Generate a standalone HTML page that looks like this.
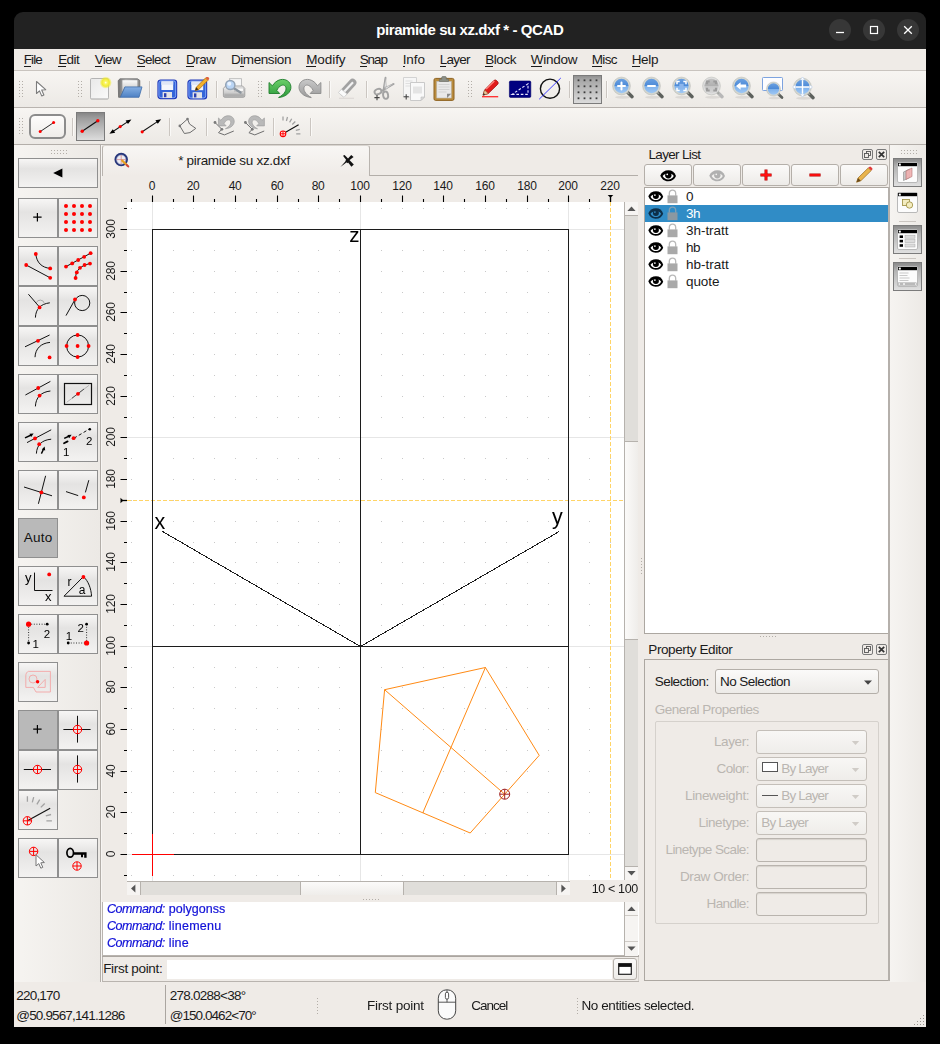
<!DOCTYPE html>
<html><head><meta charset="utf-8"><title>QCAD</title>
<style>
html,body{margin:0;padding:0;background:#000;}
body{width:940px;height:1044px;position:relative;overflow:hidden;font-family:"Liberation Sans",sans-serif;}
.a{position:absolute;display:block;box-sizing:border-box;}
.t{position:absolute;white-space:pre;font-family:"Liberation Sans",sans-serif;}
</style></head>
<body>
<!-- chrome -->
<div class="a" style="left:14px;top:40px;width:912px;height:987px;background:#efebe7;"></div>
<div class="a" style="left:14px;top:12px;width:912px;height:37px;background:#222222;border-radius:9px 9px 0 0;"></div>
<div class="t" style="left:376.25px;top:22.00px;font-size:15px;line-height:15px;color:#ffffff;letter-spacing:-0.418px;font-weight:bold;">piramide su xz.dxf * - QCAD</div>
<div class="a" style="left:829px;top:19px;width:22px;height:22px;background:#373737;border-radius:11px;"></div>
<div class="a" style="left:863px;top:19px;width:22px;height:22px;background:#373737;border-radius:11px;"></div>
<div class="a" style="left:897px;top:19px;width:22px;height:22px;background:#373737;border-radius:11px;"></div>
<svg class="a" style="left:829px;top:19px;" width="22" height="22" viewBox="0 0 22 22"><path d="M7 13.5h8" stroke="#fff" stroke-width="1.3" fill="none"/></svg>
<svg class="a" style="left:863px;top:19px;" width="22" height="22" viewBox="0 0 22 22"><rect x="7.5" y="7.5" width="7" height="7" stroke="#fff" stroke-width="1.2" fill="none"/></svg>
<svg class="a" style="left:897px;top:19px;" width="22" height="22" viewBox="0 0 22 22"><path d="M7.2 7.2l7.6 7.6M14.8 7.2l-7.6 7.6" stroke="#fff" stroke-width="1.3" fill="none"/></svg>
<div class="a" style="left:14px;top:49px;width:912px;height:21px;background:#efebe7;"></div>
<div class="a" style="left:14px;top:70px;width:912px;height:1px;background:#c9c4bf;"></div>
<div class="t" style="left:23.70px;top:53.27px;font-size:13.5px;line-height:13.5px;color:#1a1a1a;letter-spacing:-0.884px;">File</div>
<div class="a" style="left:23.7px;top:66px;width:7.0px;height:1px;background:#1a1a1a;"></div>
<div class="t" style="left:58.20px;top:53.27px;font-size:13.5px;line-height:13.5px;color:#1a1a1a;letter-spacing:-0.588px;">Edit</div>
<div class="a" style="left:58.2px;top:66px;width:7.8px;height:1px;background:#1a1a1a;"></div>
<div class="t" style="left:94.70px;top:53.27px;font-size:13.5px;line-height:13.5px;color:#1a1a1a;letter-spacing:-0.772px;">View</div>
<div class="a" style="left:94.7px;top:66px;width:7.8px;height:1px;background:#1a1a1a;"></div>
<div class="t" style="left:136.80px;top:53.27px;font-size:13.5px;line-height:13.5px;color:#1a1a1a;letter-spacing:-0.744px;">Select</div>
<div class="a" style="left:136.8px;top:66px;width:7.8px;height:1px;background:#1a1a1a;"></div>
<div class="t" style="left:185.90px;top:53.27px;font-size:13.5px;line-height:13.5px;color:#1a1a1a;letter-spacing:-0.467px;">Draw</div>
<div class="a" style="left:185.9px;top:66px;width:8.5px;height:1px;background:#1a1a1a;"></div>
<div class="t" style="left:230.90px;top:53.27px;font-size:13.5px;line-height:13.5px;color:#1a1a1a;letter-spacing:-0.409px;">Dimension</div>
<div class="a" style="left:240.1px;top:66px;width:4.0px;height:1px;background:#1a1a1a;"></div>
<div class="t" style="left:306.20px;top:53.27px;font-size:13.5px;line-height:13.5px;color:#1a1a1a;letter-spacing:-0.072px;">Modify</div>
<div class="a" style="left:306.2px;top:66px;width:10.0px;height:1px;background:#1a1a1a;"></div>
<div class="t" style="left:359.70px;top:53.27px;font-size:13.5px;line-height:13.5px;color:#1a1a1a;letter-spacing:-1.076px;">Snap</div>
<div class="a" style="left:359.7px;top:66px;width:7.8px;height:1px;background:#1a1a1a;"></div>
<div class="t" style="left:402.70px;top:53.27px;font-size:13.5px;line-height:13.5px;color:#1a1a1a;letter-spacing:-0.073px;">Info</div>
<div class="a" style="left:402.7px;top:66px;width:2.6px;height:1px;background:#1a1a1a;"></div>
<div class="t" style="left:439.70px;top:53.27px;font-size:13.5px;line-height:13.5px;color:#1a1a1a;letter-spacing:-0.742px;">Layer</div>
<div class="a" style="left:439.7px;top:66px;width:6.3px;height:1px;background:#1a1a1a;"></div>
<div class="t" style="left:485.20px;top:53.27px;font-size:13.5px;line-height:13.5px;color:#1a1a1a;letter-spacing:-0.428px;">Block</div>
<div class="a" style="left:485.2px;top:66px;width:7.8px;height:1px;background:#1a1a1a;"></div>
<div class="t" style="left:530.70px;top:53.27px;font-size:13.5px;line-height:13.5px;color:#1a1a1a;letter-spacing:-0.243px;">Window</div>
<div class="a" style="left:530.7px;top:66px;width:11.5px;height:1px;background:#1a1a1a;"></div>
<div class="t" style="left:591.70px;top:53.27px;font-size:13.5px;line-height:13.5px;color:#1a1a1a;letter-spacing:-0.648px;">Misc</div>
<div class="a" style="left:591.7px;top:66px;width:10.0px;height:1px;background:#1a1a1a;"></div>
<div class="t" style="left:631.70px;top:53.27px;font-size:13.5px;line-height:13.5px;color:#1a1a1a;letter-spacing:-0.321px;">Help</div>
<div class="a" style="left:631.7px;top:66px;width:8.5px;height:1px;background:#1a1a1a;"></div>
<!-- toolbars -->
<div class="a" style="left:14px;top:71px;width:912px;height:36px;background:linear-gradient(#f7f5f2,#ece9e5);"></div>
<div class="a" style="left:14px;top:107px;width:912px;height:1px;background:#b9b4af;"></div>
<div class="a" style="left:14px;top:108px;width:912px;height:36px;background:linear-gradient(#f7f5f2,#ece9e5);"></div>
<div class="a" style="left:14px;top:144px;width:912px;height:1px;background:#b3aea9;"></div>
<div class="a" style="left:19px;top:81px;width:1px;height:1px;background:#b3aea8;"></div><div class="a" style="left:22px;top:81px;width:1px;height:1px;background:#b3aea8;"></div><div class="a" style="left:19px;top:84px;width:1px;height:1px;background:#b3aea8;"></div><div class="a" style="left:22px;top:84px;width:1px;height:1px;background:#b3aea8;"></div><div class="a" style="left:19px;top:87px;width:1px;height:1px;background:#b3aea8;"></div><div class="a" style="left:22px;top:87px;width:1px;height:1px;background:#b3aea8;"></div><div class="a" style="left:19px;top:90px;width:1px;height:1px;background:#b3aea8;"></div><div class="a" style="left:22px;top:90px;width:1px;height:1px;background:#b3aea8;"></div><div class="a" style="left:19px;top:93px;width:1px;height:1px;background:#b3aea8;"></div><div class="a" style="left:22px;top:93px;width:1px;height:1px;background:#b3aea8;"></div><div class="a" style="left:19px;top:96px;width:1px;height:1px;background:#b3aea8;"></div><div class="a" style="left:22px;top:96px;width:1px;height:1px;background:#b3aea8;"></div>
<svg class="a" style="left:33px;top:79px;" width="16" height="20" viewBox="0 0 16 20"><path d="M3.5 2.5v12l3-2.6 2.2 5 2.2-1-2.2-4.9 4-0.3z" fill="#fff" stroke="#7d7d7d" stroke-width="1.1" stroke-linejoin="round"/></svg>
<div class="a" style="left:78px;top:81px;width:1px;height:1px;background:#b3aea8;"></div><div class="a" style="left:81px;top:81px;width:1px;height:1px;background:#b3aea8;"></div><div class="a" style="left:78px;top:84px;width:1px;height:1px;background:#b3aea8;"></div><div class="a" style="left:81px;top:84px;width:1px;height:1px;background:#b3aea8;"></div><div class="a" style="left:78px;top:87px;width:1px;height:1px;background:#b3aea8;"></div><div class="a" style="left:81px;top:87px;width:1px;height:1px;background:#b3aea8;"></div><div class="a" style="left:78px;top:90px;width:1px;height:1px;background:#b3aea8;"></div><div class="a" style="left:81px;top:90px;width:1px;height:1px;background:#b3aea8;"></div><div class="a" style="left:78px;top:93px;width:1px;height:1px;background:#b3aea8;"></div><div class="a" style="left:81px;top:93px;width:1px;height:1px;background:#b3aea8;"></div><div class="a" style="left:78px;top:96px;width:1px;height:1px;background:#b3aea8;"></div><div class="a" style="left:81px;top:96px;width:1px;height:1px;background:#b3aea8;"></div>
<svg class="a" style="left:88px;top:76px;" width="24" height="26" viewBox="0 0 24 26"><defs><radialGradient id="sun"><stop offset="0" stop-color="#fffff4"/><stop offset="0.22" stop-color="#faf66a"/><stop offset="0.6" stop-color="#f1eb2c" stop-opacity="0.95"/><stop offset="1" stop-color="#f0ea20" stop-opacity="0"/></radialGradient>
<linearGradient id="pg" x1="0" y1="0" x2="1" y2="1"><stop offset="0" stop-color="#e9e9e9"/><stop offset="1" stop-color="#fafafa"/></linearGradient></defs>
<rect x="2.5" y="3.3" width="18" height="20.2" rx="1.2" fill="#9a9a9a" opacity="0.55"/>
<rect x="2.5" y="2.5" width="18" height="20.4" rx="1.2" fill="url(#pg)" stroke="#b4b4b4" stroke-width="1"/>
<circle cx="17.700" cy="6.600" r="6.200" fill="url(#sun)"/></svg>
<svg class="a" style="left:116px;top:76px;" width="28" height="24" viewBox="0 0 28 24"><defs><linearGradient id="fb" x1="0" y1="0" x2="0" y2="1"><stop offset="0" stop-color="#86b0e4"/><stop offset="1" stop-color="#4c80c3"/></linearGradient>
<linearGradient id="fg" x1="0" y1="0" x2="1" y2="0"><stop offset="0" stop-color="#6f6f6f"/><stop offset="0.35" stop-color="#b9b9b9"/><stop offset="1" stop-color="#8c8c8c"/></linearGradient>
<linearGradient id="fp" x1="0" y1="0" x2="0" y2="1"><stop offset="0" stop-color="#fafafa"/><stop offset="1" stop-color="#c4c4c4"/></linearGradient></defs>
<path d="M2.200 4.600L4 2.800H21.500L23.800 4.400V12H9L4.400 21.300H2.600Z" fill="url(#fg)" stroke="#6a6a6a" stroke-width="0.800" stroke-linejoin="round"/>
<path d="M6.400 4.200H21.400V11.200H8.600L6.400 15.600Z" fill="url(#fp)"/>
<path d="M8.900 10.900H26L23 21.300H4.400Z" fill="url(#fb)" stroke="#3f6daa" stroke-width="0.800" stroke-linejoin="round"/></svg>
<div class="a" style="left:149px;top:81px;width:1px;height:17px;background:#cbc6c1;"></div><div class="a" style="left:150px;top:81px;width:1px;height:17px;background:#faf9f7;"></div>
<svg class="a" style="left:156.5px;top:78.5px;" width="21" height="21" viewBox="0 0 21 21"><rect x="1" y="1" width="18.6" height="18.6" rx="2.6" fill="#3465d9" stroke="#2038b8" stroke-width="1.2"/>
<rect x="1.9" y="1.9" width="16.8" height="16.8" rx="2" fill="none" stroke="#8fb2ff" stroke-width="0.8"/>
<rect x="4.4" y="2.4" width="11.8" height="8.6" fill="#f4f6fb"/>
<rect x="4.4" y="2.4" width="11.8" height="3.4" fill="#dfe6f5"/>
<rect x="5.6" y="13" width="9.4" height="6" fill="#e3e3e6"/>
<rect x="7" y="14.2" width="2.4" height="4" fill="#2a3fb0"/></svg>
<svg class="a" style="left:186.5px;top:77px;" width="24" height="23" viewBox="0 0 24 23"><g transform="translate(0,2.2)"><rect x="1" y="1" width="18.6" height="18.6" rx="2.6" fill="#3465d9" stroke="#2038b8" stroke-width="1.2"/>
<rect x="1.9" y="1.9" width="16.8" height="16.8" rx="2" fill="none" stroke="#8fb2ff" stroke-width="0.8"/>
<rect x="4.4" y="2.4" width="11.8" height="8.6" fill="#f4f6fb"/>
<rect x="4.4" y="2.4" width="11.8" height="3.4" fill="#dfe6f5"/>
<rect x="5.6" y="13" width="9.4" height="6" fill="#e3e3e6"/>
<rect x="7" y="14.2" width="2.4" height="4" fill="#2a3fb0"/></g><path d="M8.2 13.6l1-3.3 9.3-9.3 2.4 2.4-9.3 9.3z" fill="#f3b02c" stroke="#a4660c" stroke-width="0.7"/><path d="M18.5 1l2.4 2.4 0.9-0.9a1.3 1.3 0 0 0 0-1.8l-0.6-0.6a1.3 1.3 0 0 0-1.8 0z" fill="#e0603a"/><path d="M8.2 13.6l1-3.3 2.3 2.3z" fill="#3a2a1a"/></svg>
<div class="a" style="left:216px;top:81px;width:1px;height:17px;background:#cbc6c1;"></div><div class="a" style="left:217px;top:81px;width:1px;height:17px;background:#faf9f7;"></div>
<svg class="a" style="left:221px;top:76px;" width="26" height="24" viewBox="0 0 26 24"><defs><linearGradient id="pr" x1="0" y1="0" x2="0" y2="1"><stop offset="0" stop-color="#f2f2f2"/><stop offset="1" stop-color="#b4b4b4"/></linearGradient></defs>
<rect x="8.500" y="2.700" width="12" height="9" fill="#f6f6f6" stroke="#b4b4b4" stroke-width="0.800"/>
<path d="M2.400 12.400l2.200-2.400h17l2.200 2.400v7.400a1.500 1.500 0 0 1-1.500 1.500h-18.400a1.500 1.500 0 0 1-1.500-1.500z" fill="url(#pr)" stroke="#9c9c9c" stroke-width="0.900"/>
<rect x="3.400" y="17.600" width="19.400" height="2.600" fill="#8f8f8f" opacity="0.350"/>
<rect x="13.500" y="12" width="9" height="3.200" fill="#fafafa" stroke="#a8a8a8" stroke-width="0.500"/>
<path d="M12.500 12l7 4.600" stroke="#8a939c" stroke-width="2.400" stroke-linecap="round"/>
<circle cx="9.300" cy="9" r="4.600" fill="#b9d4f4" stroke="#93a3b5" stroke-width="1.500"/>
<circle cx="8.300" cy="7.800" r="2" fill="#e9f3ff"/></svg>
<div class="a" style="left:258px;top:81px;width:1px;height:1px;background:#b3aea8;"></div><div class="a" style="left:261px;top:81px;width:1px;height:1px;background:#b3aea8;"></div><div class="a" style="left:258px;top:84px;width:1px;height:1px;background:#b3aea8;"></div><div class="a" style="left:261px;top:84px;width:1px;height:1px;background:#b3aea8;"></div><div class="a" style="left:258px;top:87px;width:1px;height:1px;background:#b3aea8;"></div><div class="a" style="left:261px;top:87px;width:1px;height:1px;background:#b3aea8;"></div><div class="a" style="left:258px;top:90px;width:1px;height:1px;background:#b3aea8;"></div><div class="a" style="left:261px;top:90px;width:1px;height:1px;background:#b3aea8;"></div><div class="a" style="left:258px;top:93px;width:1px;height:1px;background:#b3aea8;"></div><div class="a" style="left:261px;top:93px;width:1px;height:1px;background:#b3aea8;"></div><div class="a" style="left:258px;top:96px;width:1px;height:1px;background:#b3aea8;"></div><div class="a" style="left:261px;top:96px;width:1px;height:1px;background:#b3aea8;"></div>
<svg class="a" style="left:266px;top:77px;" width="28" height="24" viewBox="0 0 28 24"><defs><linearGradient id="ug" x1="0" y1="0" x2="0" y2="1"><stop offset="0" stop-color="#6ccf6a"/><stop offset="1" stop-color="#2c9a3a"/></linearGradient></defs>
<path d="M3 5.5L3 16.5L13.7 16.5L10.8 13.4C13 8.6 17.4 6.600 19.400 9.400C21.400 12.400 18.600 17.400 12.600 20.500C20 20 25.400 15 24.900 9.600C24.400 4.400 19.600 1.600 14.600 2.600C11 3.400 8.400 5.600 6.400 8.800Z" fill="url(#ug)" stroke="#1f7d2c" stroke-width="0.9" stroke-linejoin="round"/></svg>
<svg class="a" style="left:297px;top:77px;" width="28" height="24" viewBox="0 0 28 24"><defs><linearGradient id="rg" x1="0" y1="0" x2="0" y2="1"><stop offset="0" stop-color="#c9c9c9"/><stop offset="1" stop-color="#9a9a9a"/></linearGradient></defs>
<g transform="translate(26.900,0) scale(-1,1)"><path d="M3 5.5L3 16.5L13.7 16.5L10.8 13.4C13 8.6 17.4 6.600 19.400 9.400C21.400 12.400 18.600 17.400 12.600 20.500C20 20 25.400 15 24.900 9.600C24.400 4.400 19.600 1.600 14.600 2.600C11 3.400 8.400 5.600 6.400 8.800Z" fill="url(#rg)" stroke="#8b8b8b" stroke-width="0.9" stroke-linejoin="round"/></g></svg>
<div class="a" style="left:329px;top:81px;width:1px;height:17px;background:#cbc6c1;"></div><div class="a" style="left:330px;top:81px;width:1px;height:17px;background:#faf9f7;"></div>
<svg class="a" style="left:335px;top:77px;" width="24" height="24" viewBox="0 0 24 24"><path d="M4 21.300h15" stroke="#dddad6" stroke-width="1.200"/>
<path d="M8.600 15.400L17.600 5.600" stroke="#a2a2a2" stroke-width="7.600" stroke-linecap="round"/>
<path d="M8.400 15.600L18 5.200" stroke="#f2f2f2" stroke-width="2.200"/>
<path d="M3.400 15.600l3-3.400 5.600 4.800-3 3.400z" fill="#fbfbfb" stroke="#cdcdcd" stroke-width="0.800" stroke-linejoin="round"/></svg>
<div class="a" style="left:366px;top:81px;width:1px;height:17px;background:#cbc6c1;"></div><div class="a" style="left:367px;top:81px;width:1px;height:17px;background:#faf9f7;"></div>
<svg class="a" style="left:371px;top:75px;" width="26" height="27" viewBox="0 0 26 27"><g fill="none" stroke="#a3a3a3" stroke-width="1.9" stroke-linecap="round">
<path d="M14.5 2.8l-2 12.6"/><path d="M22.6 9l-12 7"/>
<ellipse cx="7" cy="16.6" rx="3.6" ry="2.6" transform="rotate(-25 7 16.6)"/>
<ellipse cx="14.6" cy="20.2" rx="2.5" ry="3.7" transform="rotate(-10 14.6 20.2)"/></g>
<path d="M14.6 3l-1.4 9.4 2.2-0.4z M22.4 8.6l-8.4 3.8 1 1.8z" fill="#e9e9e9" stroke="#a9a9a9" stroke-width="0.6"/>
<path d="M3.4 22.6h5.2M6 20v5.2" stroke="#444" stroke-width="1.1"/></svg>
<svg class="a" style="left:401px;top:75px;" width="26" height="27" viewBox="0 0 26 27"><path d="M2.5 2.5h13v19.5h-13z" fill="#f6f6f6" stroke="#cfcfcf" stroke-width="0.9"/>
<path d="M4.5 6h7M4.5 8.5h7M4.5 11h5" stroke="#d9d9d9" stroke-width="0.8"/>
<path d="M9.5 7.5h14v14.5l-3.5 3.5h-10.5z" fill="#f9f9f9" stroke="#c4c4c4" stroke-width="0.9"/>
<path d="M12 11.5h9v7h-9z" fill="#e4e4e4"/>
<path d="M20 25.5v-3.5h3.5z" fill="#dcdcdc" stroke="#bdbdbd" stroke-width="0.6"/>
<path d="M2.6 21.8h5.2M5.2 19.2v5.2" stroke="#444" stroke-width="1.1"/></svg>
<svg class="a" style="left:432px;top:75px;" width="24" height="27" viewBox="0 0 24 27"><rect x="2" y="3.4" width="20" height="22" rx="1.6" fill="#b98c3e" stroke="#8f6321" stroke-width="1"/>
<rect x="4.8" y="6.4" width="14.4" height="16.6" fill="#e9e9e9" stroke="#bdbdbd" stroke-width="0.6"/>
<path d="M6.5 9.5h11M6.5 12h11M6.5 14.5h11M6.5 17h8" stroke="#d0d0d0" stroke-width="0.9"/>
<path d="M15 23v-4.2h4.2z" fill="#8b8b8b"/>
<path d="M7.4 6.4v-2.2h2.3v-1.6a1 1 0 0 1 1-1h2.6a1 1 0 0 1 1 1v1.6h2.3v2.2z" fill="#8d9088" stroke="#6d7068" stroke-width="0.7"/></svg>
<div class="a" style="left:468px;top:81px;width:1px;height:1px;background:#b3aea8;"></div><div class="a" style="left:471px;top:81px;width:1px;height:1px;background:#b3aea8;"></div><div class="a" style="left:468px;top:84px;width:1px;height:1px;background:#b3aea8;"></div><div class="a" style="left:471px;top:84px;width:1px;height:1px;background:#b3aea8;"></div><div class="a" style="left:468px;top:87px;width:1px;height:1px;background:#b3aea8;"></div><div class="a" style="left:471px;top:87px;width:1px;height:1px;background:#b3aea8;"></div><div class="a" style="left:468px;top:90px;width:1px;height:1px;background:#b3aea8;"></div><div class="a" style="left:471px;top:90px;width:1px;height:1px;background:#b3aea8;"></div><div class="a" style="left:468px;top:93px;width:1px;height:1px;background:#b3aea8;"></div><div class="a" style="left:471px;top:93px;width:1px;height:1px;background:#b3aea8;"></div><div class="a" style="left:468px;top:96px;width:1px;height:1px;background:#b3aea8;"></div><div class="a" style="left:471px;top:96px;width:1px;height:1px;background:#b3aea8;"></div>
<svg class="a" style="left:480px;top:78px;" width="20" height="22" viewBox="0 0 20 22"><path d="M2 18.7h16.2" stroke="#ff2a2a" stroke-width="1.3"/>
<path d="M3 17.2l1.6-5.2 9.2-9.4a2 2 0 0 1 2.8 0l1 1a2 2 0 0 1 0 2.8l-9.4 9.2z" fill="#e11b1b" stroke="#a30f0f" stroke-width="0.8" stroke-linejoin="round"/>
<path d="M6.2 11.2l8.2-8.2" stroke="#ff8a80" stroke-width="1.2"/>
<path d="M3 17.2l1.6-5.2 3.6 3.6z" fill="#e8c79a" stroke="#8a5a2a" stroke-width="0.5"/><path d="M3 17.2l0.7-2.2 1.5 1.5z" fill="#222"/></svg>
<svg class="a" style="left:508px;top:80px;" width="24" height="19" viewBox="0 0 24 19"><rect x="1.400" y="1" width="21.400" height="16.400" rx="1.200" fill="#000080" stroke="#00006a" stroke-width="0.600"/>
<path d="M4 14.400h16v-10.600z" fill="none" stroke="#e8e8ff" stroke-width="1.1" stroke-dasharray="2.6 1.8"/></svg>
<svg class="a" style="left:537px;top:76px;" width="26" height="26" viewBox="0 0 26 26"><circle cx="13" cy="12.700" r="9.600" fill="none" stroke="#111" stroke-width="1.400"/>
<path d="M2.200 23.200l21.600-21.200" stroke="#2a2aff" stroke-width="0.900"/></svg>
<div class="a" style="left:569px;top:81px;width:1px;height:17px;background:#cbc6c1;"></div><div class="a" style="left:570px;top:81px;width:1px;height:17px;background:#faf9f7;"></div>
<svg class="a" style="left:573px;top:75px;" width="29" height="29" viewBox="0 0 29 29"><defs><linearGradient id="gb" x1="0" y1="0" x2="0" y2="1"><stop offset="0" stop-color="#8e8e8e"/><stop offset="0.15" stop-color="#a6a6a6"/><stop offset="1" stop-color="#dcdcdc"/></linearGradient></defs><rect x="0.5" y="0.5" width="28" height="28" fill="url(#gb)" stroke="#7b7b7b"/><rect x="4.6" y="4.4" width="1.8" height="1.8" fill="#3c3c3c"/><rect x="10.6" y="4.4" width="1.8" height="1.8" fill="#3c3c3c"/><rect x="16.6" y="4.4" width="1.8" height="1.8" fill="#3c3c3c"/><rect x="22.6" y="4.4" width="1.8" height="1.8" fill="#3c3c3c"/><rect x="4.6" y="10.4" width="1.8" height="1.8" fill="#3c3c3c"/><rect x="10.6" y="10.4" width="1.8" height="1.8" fill="#3c3c3c"/><rect x="16.6" y="10.4" width="1.8" height="1.8" fill="#3c3c3c"/><rect x="22.6" y="10.4" width="1.8" height="1.8" fill="#3c3c3c"/><rect x="4.6" y="16.4" width="1.8" height="1.8" fill="#3c3c3c"/><rect x="10.6" y="16.4" width="1.8" height="1.8" fill="#3c3c3c"/><rect x="16.6" y="16.4" width="1.8" height="1.8" fill="#3c3c3c"/><rect x="22.6" y="16.4" width="1.8" height="1.8" fill="#3c3c3c"/><rect x="4.6" y="22.4" width="1.8" height="1.8" fill="#3c3c3c"/><rect x="10.6" y="22.4" width="1.8" height="1.8" fill="#3c3c3c"/><rect x="16.6" y="22.4" width="1.8" height="1.8" fill="#3c3c3c"/><rect x="22.6" y="22.4" width="1.8" height="1.8" fill="#3c3c3c"/></svg>
<div class="a" style="left:606px;top:81px;width:1px;height:17px;background:#cbc6c1;"></div><div class="a" style="left:607px;top:81px;width:1px;height:17px;background:#faf9f7;"></div>
<svg class="a" style="left:610.0px;top:75.3px;" width="28" height="28" viewBox="0 0 28 28"><defs><linearGradient id="zg621" x1="0" y1="0" x2="0" y2="1"><stop offset="0" stop-color="#6ea3e3"/><stop offset="0.5" stop-color="#4c8ad7"/><stop offset="0.52" stop-color="#7fb2ec"/><stop offset="1" stop-color="#a3caf5"/></linearGradient></defs><g transform="translate(0.00,0.00) scale(1.0)"><ellipse cx="13" cy="22.3" rx="8" ry="1.5" fill="#000" opacity="0.08"/><path d="M17.800 17.600l4.300 4.100" stroke="#5d615d" stroke-width="3.400" stroke-linecap="round"/><path d="M16.200 16.200l2.600 2.600" stroke="#a0a39f" stroke-width="1.600"/><circle cx="11.500" cy="11" r="8" fill="url(#zg621)" stroke="#d3d6d0" stroke-width="1.700"/><circle cx="11.500" cy="11" r="8.900" fill="none" stroke="#a4a7a3" stroke-width="0.500" opacity="0.800"/><path d="M8 11h7M11.5 7.500v7" stroke="#fff" stroke-width="2" stroke-linecap="round" fill="none"/></g></svg>
<svg class="a" style="left:640.0px;top:75.3px;" width="28" height="28" viewBox="0 0 28 28"><defs><linearGradient id="zg651" x1="0" y1="0" x2="0" y2="1"><stop offset="0" stop-color="#6ea3e3"/><stop offset="0.5" stop-color="#4c8ad7"/><stop offset="0.52" stop-color="#7fb2ec"/><stop offset="1" stop-color="#a3caf5"/></linearGradient></defs><g transform="translate(0.00,0.00) scale(1.0)"><ellipse cx="13" cy="22.3" rx="8" ry="1.5" fill="#000" opacity="0.08"/><path d="M17.800 17.600l4.300 4.100" stroke="#5d615d" stroke-width="3.400" stroke-linecap="round"/><path d="M16.200 16.200l2.600 2.600" stroke="#a0a39f" stroke-width="1.600"/><circle cx="11.500" cy="11" r="8" fill="url(#zg651)" stroke="#d3d6d0" stroke-width="1.700"/><circle cx="11.500" cy="11" r="8.900" fill="none" stroke="#a4a7a3" stroke-width="0.500" opacity="0.800"/><path d="M8 11h7" stroke="#fff" stroke-width="2" stroke-linecap="round" fill="none"/></g></svg>
<svg class="a" style="left:670.0px;top:75.3px;" width="28" height="28" viewBox="0 0 28 28"><defs><linearGradient id="zg681" x1="0" y1="0" x2="0" y2="1"><stop offset="0" stop-color="#6ea3e3"/><stop offset="0.5" stop-color="#4c8ad7"/><stop offset="0.52" stop-color="#7fb2ec"/><stop offset="1" stop-color="#a3caf5"/></linearGradient></defs><g transform="translate(0.00,0.00) scale(1.0)"><ellipse cx="13" cy="22.3" rx="8" ry="1.5" fill="#000" opacity="0.08"/><path d="M17.800 17.600l4.300 4.100" stroke="#5d615d" stroke-width="3.400" stroke-linecap="round"/><path d="M16.200 16.200l2.600 2.600" stroke="#a0a39f" stroke-width="1.600"/><circle cx="11.500" cy="11" r="8" fill="url(#zg681)" stroke="#d3d6d0" stroke-width="1.700"/><circle cx="11.500" cy="11" r="8.900" fill="none" stroke="#a4a7a3" stroke-width="0.500" opacity="0.800"/><path d="M7 9.2v-2.7h2.7M13.3 6.5h2.7v2.7M16 12.8v2.7h-2.7M9.7 15.5h-2.7v-2.7" stroke="#fff" stroke-width="1.5" fill="none"/><rect x="9.3" y="8.8" width="4.4" height="4.4" fill="#8cb6ec"/></g></svg>
<svg class="a" style="left:700.0px;top:75.3px;" width="28" height="28" viewBox="0 0 28 28"><defs><linearGradient id="zg711" x1="0" y1="0" x2="0" y2="1"><stop offset="0" stop-color="#c4c4c4"/><stop offset="0.5" stop-color="#b0b0b0"/><stop offset="0.52" stop-color="#c6c6c6"/><stop offset="1" stop-color="#d8d8d8"/></linearGradient></defs><g transform="translate(0.00,0.00) scale(1.0)"><ellipse cx="13" cy="22.3" rx="8" ry="1.5" fill="#000" opacity="0.08"/><path d="M17.800 17.600l4.300 4.100" stroke="#b8b8b8" stroke-width="3.400" stroke-linecap="round"/><path d="M16.200 16.200l2.600 2.600" stroke="#a0a39f" stroke-width="1.600"/><circle cx="11.500" cy="11" r="8" fill="url(#zg711)" stroke="#dedede" stroke-width="1.700"/><circle cx="11.500" cy="11" r="8.900" fill="none" stroke="#a4a7a3" stroke-width="0.500" opacity="0.800"/><path d="M7 9.2v-2.7h2.7M13.3 6.5h2.7v2.7M16 12.8v2.7h-2.7M9.7 15.5h-2.7v-2.7" stroke="#9b9b9b" stroke-width="2.2" fill="none"/></g></svg>
<svg class="a" style="left:730.0px;top:75.3px;" width="28" height="28" viewBox="0 0 28 28"><defs><linearGradient id="zg741" x1="0" y1="0" x2="0" y2="1"><stop offset="0" stop-color="#6ea3e3"/><stop offset="0.5" stop-color="#4c8ad7"/><stop offset="0.52" stop-color="#7fb2ec"/><stop offset="1" stop-color="#a3caf5"/></linearGradient></defs><g transform="translate(0.00,0.00) scale(1.0)"><ellipse cx="13" cy="22.3" rx="8" ry="1.5" fill="#000" opacity="0.08"/><path d="M17.800 17.600l4.300 4.100" stroke="#5d615d" stroke-width="3.400" stroke-linecap="round"/><path d="M16.200 16.200l2.600 2.600" stroke="#a0a39f" stroke-width="1.600"/><circle cx="11.500" cy="11" r="8" fill="url(#zg741)" stroke="#d3d6d0" stroke-width="1.700"/><circle cx="11.500" cy="11" r="8.900" fill="none" stroke="#a4a7a3" stroke-width="0.500" opacity="0.800"/><path d="M6 11l4.6-3.8v2.3h5.6v3h-5.6v2.3z" fill="#fff"/></g></svg>
<svg class="a" style="left:761px;top:76px;" width="26" height="26" viewBox="0 0 26 26"><rect x="1.500" y="1.500" width="20" height="13" rx="0.800" fill="#fdfdff" stroke="#7da3df" stroke-width="1"/></svg>
<svg class="a" style="left:761.5px;top:77.8px;" width="28" height="28" viewBox="0 0 28 28"><defs><linearGradient id="zg773" x1="0" y1="0" x2="0" y2="1"><stop offset="0" stop-color="#6ea3e3"/><stop offset="0.5" stop-color="#4c8ad7"/><stop offset="0.52" stop-color="#7fb2ec"/><stop offset="1" stop-color="#a3caf5"/></linearGradient></defs><g transform="translate(2.30,2.20) scale(0.8)"><ellipse cx="13" cy="22.3" rx="8" ry="1.5" fill="#000" opacity="0.08"/><path d="M17.800 17.600l4.300 4.100" stroke="#5d615d" stroke-width="3.400" stroke-linecap="round"/><path d="M16.200 16.200l2.600 2.600" stroke="#a0a39f" stroke-width="1.600"/><circle cx="11.500" cy="11" r="8" fill="url(#zg773)" stroke="#d3d6d0" stroke-width="1.700"/><circle cx="11.500" cy="11" r="8.900" fill="none" stroke="#a4a7a3" stroke-width="0.500" opacity="0.800"/></g></svg>
<svg class="a" style="left:791.0px;top:75.8px;" width="28" height="28" viewBox="0 0 28 28"><defs><linearGradient id="zg802" x1="0" y1="0" x2="0" y2="1"><stop offset="0" stop-color="#6ea3e3"/><stop offset="0.5" stop-color="#4c8ad7"/><stop offset="0.52" stop-color="#7fb2ec"/><stop offset="1" stop-color="#a3caf5"/></linearGradient></defs><g transform="translate(0.00,0.00) scale(1.0)"><ellipse cx="13" cy="22.3" rx="8" ry="1.5" fill="#000" opacity="0.08"/><path d="M17.800 17.600l4.300 4.100" stroke="#5d615d" stroke-width="3.400" stroke-linecap="round"/><path d="M16.200 16.200l2.600 2.600" stroke="#a0a39f" stroke-width="1.600"/><circle cx="11.500" cy="11" r="8" fill="url(#zg802)" stroke="#d3d6d0" stroke-width="1.700"/><circle cx="11.500" cy="11" r="8.900" fill="none" stroke="#a4a7a3" stroke-width="0.500" opacity="0.800"/><path d="M11.5 2.2v17.6M2.7 11h17.6" stroke="#fff" stroke-width="1.4"/><path d="M11.5 1l2.2 3h-4.4zM11.5 21l2.2-3h-4.4zM1.5 11l3-2.2v4.4zM21.5 11l-3-2.2v4.4z" fill="#fff" stroke="#9fc0ee" stroke-width="0.4"/></g></svg>
<div class="a" style="left:19px;top:118px;width:1px;height:1px;background:#b3aea8;"></div><div class="a" style="left:22px;top:118px;width:1px;height:1px;background:#b3aea8;"></div><div class="a" style="left:19px;top:121px;width:1px;height:1px;background:#b3aea8;"></div><div class="a" style="left:22px;top:121px;width:1px;height:1px;background:#b3aea8;"></div><div class="a" style="left:19px;top:124px;width:1px;height:1px;background:#b3aea8;"></div><div class="a" style="left:22px;top:124px;width:1px;height:1px;background:#b3aea8;"></div><div class="a" style="left:19px;top:127px;width:1px;height:1px;background:#b3aea8;"></div><div class="a" style="left:22px;top:127px;width:1px;height:1px;background:#b3aea8;"></div><div class="a" style="left:19px;top:130px;width:1px;height:1px;background:#b3aea8;"></div><div class="a" style="left:22px;top:130px;width:1px;height:1px;background:#b3aea8;"></div><div class="a" style="left:19px;top:133px;width:1px;height:1px;background:#b3aea8;"></div><div class="a" style="left:22px;top:133px;width:1px;height:1px;background:#b3aea8;"></div>
<div class="a" style="left:29px;top:114px;width:37px;height:25px;border:2px solid #8c8c8c;border-radius:6px;background:linear-gradient(#fdfcfb,#efedea);"></div>
<svg class="a" style="left:29px;top:114px;" width="37" height="25" viewBox="0 0 37 25"><path d="M11.2 17.6l13.4-9" stroke="#111" stroke-width="0.9"/><circle cx="11.2" cy="17.6" r="1.5" fill="#f00"/><circle cx="24.6" cy="8.6" r="1.5" fill="#f00"/></svg>
<div class="a" style="left:72px;top:118px;width:1px;height:18px;background:#cbc6c1;"></div><div class="a" style="left:73px;top:118px;width:1px;height:18px;background:#faf9f7;"></div>
<svg class="a" style="left:76px;top:112px;" width="29" height="29" viewBox="0 0 29 29"><defs><linearGradient id="pb" x1="0" y1="0" x2="0" y2="1"><stop offset="0" stop-color="#858585"/><stop offset="0.2" stop-color="#9d9d9d"/><stop offset="1" stop-color="#dedede"/></linearGradient></defs><rect x="0.5" y="0.5" width="28" height="28" fill="url(#pb)" stroke="#7b7b7b"/><path d="M6.2 19.2l15.6-10.4" stroke="#111" stroke-width="1.1"/><circle cx="6.2" cy="19.2" r="1.7" fill="#f00"/><circle cx="21.8" cy="8.8" r="1.7" fill="#f00"/></svg>
<svg class="a" style="left:108px;top:112px;" width="26" height="29" viewBox="0 0 26 29"><path d="M3.5 20.5l17.5-11.6" stroke="#111" stroke-width="1.1"/><path d="M1.4 21.8l5.8-1-2.4-3.6z M23.4 7.4l-5.8 1 2.4 3.6z" fill="#000"/><circle cx="12.2" cy="14.6" r="1.6" fill="#f00"/></svg>
<svg class="a" style="left:138px;top:112px;" width="26" height="29" viewBox="0 0 26 29"><path d="M4.2 19.8l15.6-10.4" stroke="#111" stroke-width="1.1"/><path d="M23.2 7.2l-5.8 1 2.4 3.6z" fill="#000"/><circle cx="4.2" cy="19.8" r="1.6" fill="#f00"/></svg>
<div class="a" style="left:169px;top:118px;width:1px;height:18px;background:#cbc6c1;"></div><div class="a" style="left:170px;top:118px;width:1px;height:18px;background:#faf9f7;"></div>
<svg class="a" style="left:176px;top:116px;" width="24" height="20" viewBox="0 0 24 20"><path d="M11.500 3L3.800 9.900L8.400 17.500L14 16.600L19.800 12.400L13.500 8Z" fill="none" stroke="#6e6e6e" stroke-width="1"/><circle cx="11.500" cy="3" r="1.300" fill="#7a7a7a"/><circle cx="3.800" cy="9.900" r="1.300" fill="#7a7a7a"/></svg>
<div class="a" style="left:206px;top:118px;width:1px;height:18px;background:#cbc6c1;"></div><div class="a" style="left:207px;top:118px;width:1px;height:18px;background:#faf9f7;"></div>
<svg class="a" style="left:212px;top:114px;" width="26" height="24" viewBox="0 0 26 24"><path d="M3 8.500L9.900 15.300L6.500 18.700L12.400 20.900L21.800 17" fill="none" stroke="#6e6e6e" stroke-width="1"/><circle cx="3" cy="8.500" r="1.400" fill="#7a7a7a"/><circle cx="9.900" cy="15.300" r="1.400" fill="#7a7a7a"/><g transform="translate(4.300,0) scale(0.720)"><path d="M3 5.5L3 16.5L13.7 16.5L10.8 13.4C13 8.6 17.4 6.600 19.400 9.400C21.400 12.400 18.600 17.400 12.600 20.500C20 20 25.400 15 24.900 9.600C24.400 4.400 19.600 1.600 14.600 2.600C11 3.400 8.400 5.600 6.400 8.800Z" fill="#b9b9b9" stroke="#9c9c9c" stroke-width="0.900"/></g></svg>
<svg class="a" style="left:242px;top:114px;" width="26" height="24" viewBox="0 0 26 24"><g transform="translate(0.400,0)"><path d="M3 8.500L9.900 15.300L6.500 18.700L12.400 20.900L21.800 17" fill="none" stroke="#6e6e6e" stroke-width="1"/><circle cx="3" cy="8.500" r="1.400" fill="#7a7a7a"/><circle cx="9.900" cy="15.300" r="1.400" fill="#7a7a7a"/></g><g transform="translate(24.560,0) scale(-0.720,0.720)"><path d="M3 5.5L3 16.5L13.7 16.5L10.8 13.4C13 8.6 17.4 6.600 19.400 9.400C21.400 12.400 18.600 17.400 12.600 20.500C20 20 25.400 15 24.900 9.600C24.400 4.400 19.600 1.600 14.600 2.600C11 3.400 8.400 5.600 6.400 8.800Z" fill="#b9b9b9" stroke="#9c9c9c" stroke-width="0.900"/></g></svg>
<div class="a" style="left:273px;top:118px;width:1px;height:18px;background:#cbc6c1;"></div><div class="a" style="left:274px;top:118px;width:1px;height:18px;background:#faf9f7;"></div>
<svg class="a" style="left:278px;top:114px;" width="26" height="26" viewBox="0 0 26 26"><path d="M5.0 6.6L5.0 2.4M8.4 7.0L9.5 3.0M11.6 8.4L13.7 4.7M14.3 10.5L17.3 7.5M17.8 16.4L21.8 15.3M18.2 19.8L22.4 19.8" stroke="#a0a0a0" stroke-width="1.250" fill="none"/>
<path d="M5 19.800l15.600-9" stroke="#111" stroke-width="1.100"/>
<circle cx="5" cy="19.800" r="2.800" fill="#fff" stroke="#f00" stroke-width="1.100"/><path d="M2.200 19.800h5.600M5 17v5.600" stroke="#f00" stroke-width="1"/></svg>
<div class="a" style="left:310px;top:118px;width:1px;height:18px;background:#cbc6c1;"></div><div class="a" style="left:311px;top:118px;width:1px;height:18px;background:#faf9f7;"></div>
<!-- toolbox -->
<div class="a" style="left:14px;top:145px;width:86px;height:837px;background:linear-gradient(90deg,#f6f4f1,#ece9e5);"></div>
<div class="a" style="left:100px;top:145px;width:1px;height:837px;background:#b3aea9;"></div>
<div class="a" style="left:101px;top:145px;width:1px;height:837px;background:#f7f5f3;"></div>
<div class="a" style="left:51px;top:150px;width:1px;height:1px;background:#b3aea8;"></div>
<div class="a" style="left:51px;top:153px;width:1px;height:1px;background:#b3aea8;"></div>
<div class="a" style="left:54px;top:150px;width:1px;height:1px;background:#b3aea8;"></div>
<div class="a" style="left:54px;top:153px;width:1px;height:1px;background:#b3aea8;"></div>
<div class="a" style="left:57px;top:150px;width:1px;height:1px;background:#b3aea8;"></div>
<div class="a" style="left:57px;top:153px;width:1px;height:1px;background:#b3aea8;"></div>
<div class="a" style="left:60px;top:150px;width:1px;height:1px;background:#b3aea8;"></div>
<div class="a" style="left:60px;top:153px;width:1px;height:1px;background:#b3aea8;"></div>
<div class="a" style="left:63px;top:150px;width:1px;height:1px;background:#b3aea8;"></div>
<div class="a" style="left:63px;top:153px;width:1px;height:1px;background:#b3aea8;"></div>
<div class="a" style="left:66px;top:150px;width:1px;height:1px;background:#b3aea8;"></div>
<div class="a" style="left:66px;top:153px;width:1px;height:1px;background:#b3aea8;"></div>
<div class="a" style="left:18px;top:158px;width:80px;height:30px;background:linear-gradient(#f7f6f5 0%,#e4e3e2 35%,#f3f2f1 100%);border:1px solid #8f8f8f;"></div><svg class="a" style="left:18px;top:158px;" width="80" height="30" viewBox="0 0 80 30"><path d="M35.200 15l9.200-4.600v9.200z" fill="#000"/></svg>
<div class="a" style="left:18px;top:198px;width:40px;height:40px;background:linear-gradient(#f7f6f5 0%,#e4e3e2 35%,#f3f2f1 100%);border:1px solid #8f8f8f;"></div><svg class="a" style="left:18px;top:198px;" width="40" height="40" viewBox="0 0 40 40"><path d="M15.200 19.200h8.400M19.400 15v8.400" stroke="#000" stroke-width="1.200"/></svg>
<div class="a" style="left:58px;top:198px;width:40px;height:40px;background:linear-gradient(#f7f6f5 0%,#e4e3e2 35%,#f3f2f1 100%);border:1px solid #8f8f8f;"></div><svg class="a" style="left:58px;top:198px;" width="40" height="40" viewBox="0 0 40 40"><circle cx="8" cy="8" r="2" fill="#f00"/><circle cx="16" cy="8" r="2" fill="#f00"/><circle cx="24" cy="8" r="2" fill="#f00"/><circle cx="32" cy="8" r="2" fill="#f00"/><circle cx="8" cy="16" r="2" fill="#f00"/><circle cx="16" cy="16" r="2" fill="#f00"/><circle cx="24" cy="16" r="2" fill="#f00"/><circle cx="32" cy="16" r="2" fill="#f00"/><circle cx="8" cy="24" r="2" fill="#f00"/><circle cx="16" cy="24" r="2" fill="#f00"/><circle cx="24" cy="24" r="2" fill="#f00"/><circle cx="32" cy="24" r="2" fill="#f00"/><circle cx="8" cy="32" r="2" fill="#f00"/><circle cx="16" cy="32" r="2" fill="#f00"/><circle cx="24" cy="32" r="2" fill="#f00"/><circle cx="32" cy="32" r="2" fill="#f00"/></svg>
<div class="a" style="left:18px;top:246px;width:40px;height:40px;background:linear-gradient(#f7f6f5 0%,#e4e3e2 35%,#f3f2f1 100%);border:1px solid #8f8f8f;"></div><svg class="a" style="left:18px;top:246px;" width="40" height="40" viewBox="0 0 40 40"><path d="M8.200 19l24 12.800" stroke="#111" stroke-width="1" fill="none"/><path d="M17.800 8c0.800 8.600 6 13.600 14.400 14.400" stroke="#111" stroke-width="1" fill="none"/><circle cx="8.2" cy="19" r="1.9" fill="#f00"/><circle cx="32.2" cy="31.8" r="1.9" fill="#f00"/><circle cx="17.8" cy="8" r="1.9" fill="#f00"/><circle cx="32.2" cy="22.4" r="1.9" fill="#f00"/></svg>
<div class="a" style="left:58px;top:246px;width:40px;height:40px;background:linear-gradient(#f7f6f5 0%,#e4e3e2 35%,#f3f2f1 100%);border:1px solid #8f8f8f;"></div><svg class="a" style="left:58px;top:246px;" width="40" height="40" viewBox="0 0 40 40"><path d="M8 20.600l24.600-13.400" stroke="#111" stroke-width="1" fill="none"/><path d="M17.600 32c0-8.200 5.600-12.600 14.400-14.400" stroke="#111" stroke-width="1" fill="none"/><circle cx="8" cy="20.6" r="1.9" fill="#f00"/><circle cx="14.2" cy="17.4" r="1.9" fill="#f00"/><circle cx="20.2" cy="14" r="1.9" fill="#f00"/><circle cx="26.2" cy="10.8" r="1.9" fill="#f00"/><circle cx="32.6" cy="7.2" r="1.9" fill="#f00"/><circle cx="17.6" cy="32" r="1.9" fill="#f00"/><circle cx="18.8" cy="26.4" r="1.9" fill="#f00"/><circle cx="22" cy="21.8" r="1.9" fill="#f00"/><circle cx="26.6" cy="19" r="1.9" fill="#f00"/><circle cx="32" cy="17.6" r="1.9" fill="#f00"/></svg>
<div class="a" style="left:18px;top:286px;width:40px;height:40px;background:linear-gradient(#f7f6f5 0%,#e4e3e2 35%,#f3f2f1 100%);border:1px solid #8f8f8f;"></div><svg class="a" style="left:18px;top:286px;" width="40" height="40" viewBox="0 0 40 40"><path d="M10.400 8.200l11.400 13.200" stroke="#111" stroke-width="1" fill="none"/><path d="M17.400 31.600c0.400-8.600 5-13.600 14.400-14.800" stroke="#111" stroke-width="1" fill="none"/><path d="M18.200 17.200a4.200 4.200 0 0 1 8.200 0.400" stroke="#999" stroke-width="0.800" fill="none"/><circle cx="21.6" cy="21.4" r="1.9" fill="#f00"/></svg>
<div class="a" style="left:58px;top:286px;width:40px;height:40px;background:linear-gradient(#f7f6f5 0%,#e4e3e2 35%,#f3f2f1 100%);border:1px solid #8f8f8f;"></div><svg class="a" style="left:58px;top:286px;" width="40" height="40" viewBox="0 0 40 40"><path d="M8 29.600l9.200-16.400" stroke="#111" stroke-width="1" fill="none"/><circle cx="24.200" cy="17" r="7.600" stroke="#111" stroke-width="1" fill="none"/><circle cx="17" cy="13.4" r="1.9" fill="#f00"/></svg>
<div class="a" style="left:18px;top:326px;width:40px;height:40px;background:linear-gradient(#f7f6f5 0%,#e4e3e2 35%,#f3f2f1 100%);border:1px solid #8f8f8f;"></div><svg class="a" style="left:18px;top:326px;" width="40" height="40" viewBox="0 0 40 40"><path d="M7 20.800l24.600-11.800" stroke="#111" stroke-width="1" fill="none"/><path d="M17 31.200c0.400-8.600 6-14 15-14.800" stroke="#111" stroke-width="1" fill="none"/><circle cx="20" cy="14.8" r="1.9" fill="#f00"/><circle cx="31.6" cy="31.4" r="1.9" fill="#f00"/></svg>
<div class="a" style="left:58px;top:326px;width:40px;height:40px;background:linear-gradient(#f7f6f5 0%,#e4e3e2 35%,#f3f2f1 100%);border:1px solid #8f8f8f;"></div><svg class="a" style="left:58px;top:326px;" width="40" height="40" viewBox="0 0 40 40"><circle cx="19.600" cy="20" r="11" stroke="#111" stroke-width="1" fill="none"/><circle cx="19.6" cy="9" r="1.9" fill="#f00"/><circle cx="8.6" cy="20" r="1.9" fill="#f00"/><circle cx="30.6" cy="20" r="1.9" fill="#f00"/><circle cx="19.6" cy="31" r="1.9" fill="#f00"/><circle cx="19.6" cy="20" r="1.9" fill="#f00"/></svg>
<div class="a" style="left:18px;top:374px;width:40px;height:40px;background:linear-gradient(#f7f6f5 0%,#e4e3e2 35%,#f3f2f1 100%);border:1px solid #8f8f8f;"></div><svg class="a" style="left:18px;top:374px;" width="40" height="40" viewBox="0 0 40 40"><path d="M7.400 21l25-13.600" stroke="#111" stroke-width="1" fill="none"/><path d="M17.400 32.400c0.400-9 5.600-14.400 15-15.400" stroke="#111" stroke-width="1" fill="none"/><circle cx="20.2" cy="14" r="1.9" fill="#f00"/><circle cx="21.6" cy="21.6" r="1.9" fill="#f00"/></svg>
<div class="a" style="left:58px;top:374px;width:40px;height:40px;background:linear-gradient(#f7f6f5 0%,#e4e3e2 35%,#f3f2f1 100%);border:1px solid #8f8f8f;"></div><svg class="a" style="left:58px;top:374px;" width="40" height="40" viewBox="0 0 40 40"><rect x="6.500" y="9.500" width="27" height="21" stroke="#111" stroke-width="1.200" fill="none"/><path d="M8.600 28.400l22.600-17.200" stroke="#aaa" stroke-width="0.800"/><path d="M14 24.200l12-9.200" stroke="#333" stroke-width="0.800"/><circle cx="20" cy="19.8" r="1.9" fill="#f00"/></svg>
<div class="a" style="left:18px;top:422px;width:40px;height:40px;background:linear-gradient(#f7f6f5 0%,#e4e3e2 35%,#f3f2f1 100%);border:1px solid #8f8f8f;"></div><svg class="a" style="left:18px;top:422px;" width="40" height="40" viewBox="0 0 40 40"><path d="M9 20.600l24.200-12.800" stroke="#111" stroke-width="1" fill="none"/><path d="M18.400 31.600c0.400-8.400 5.200-13.600 14.800-14.400" stroke="#111" stroke-width="1" fill="none"/><path d="M7 15.800l6.200-2.800" stroke="#000" stroke-width="1.400"/><path d="M15.600 11.600l-4.200 0.200 1.800 3.200z" fill="#000"/><path d="M23.400 31.600l2.400-5" stroke="#000" stroke-width="1.400"/><path d="M26.600 24.400l-2.800 3 3.400 1z" fill="#000"/><circle cx="17" cy="16.4" r="1.9" fill="#f00"/><circle cx="21.2" cy="22.2" r="1.9" fill="#f00"/></svg>
<div class="a" style="left:58px;top:422px;width:40px;height:40px;background:linear-gradient(#f7f6f5 0%,#e4e3e2 35%,#f3f2f1 100%);border:1px solid #8f8f8f;"></div><svg class="a" style="left:58px;top:422px;will-change:transform;" width="40" height="40" viewBox="0 0 40 40"><path d="M6.200 16.400l5.200-2.400" stroke="#000" stroke-width="1.400"/><path d="M13.600 12.800l-4.200 0.200 1.800 3.200z" fill="#000"/><path d="M16 16.200l16-9.600" stroke="#111" stroke-width="1" stroke-dasharray="3.200 2.400"/><path d="M6 21.200l3.600-1.800" stroke="#000" stroke-width="1.800" stroke-linecap="round"/><circle cx="31.800" cy="7.200" r="1.300" fill="#000"/><circle cx="15.6" cy="16.2" r="1.9" fill="#f00"/><text x="28" y="23.200" font-family="Liberation Sans" font-size="11.500" fill="#000">2</text><text x="5" y="34.200" font-family="Liberation Sans" font-size="11.500" fill="#000">1</text></svg>
<div class="a" style="left:18px;top:470px;width:40px;height:40px;background:linear-gradient(#f7f6f5 0%,#e4e3e2 35%,#f3f2f1 100%);border:1px solid #8f8f8f;"></div><svg class="a" style="left:18px;top:470px;" width="40" height="40" viewBox="0 0 40 40"><path d="M6 17l28 8.800" stroke="#111" stroke-width="1" fill="none"/><path d="M27.600 5.800l-7.200 28" stroke="#111" stroke-width="1" fill="none"/><circle cx="23.4" cy="22.4" r="1.9" fill="#f00"/></svg>
<div class="a" style="left:58px;top:470px;width:40px;height:40px;background:linear-gradient(#f7f6f5 0%,#e4e3e2 35%,#f3f2f1 100%);border:1px solid #8f8f8f;"></div><svg class="a" style="left:58px;top:470px;" width="40" height="40" viewBox="0 0 40 40"><path d="M8 21.600l12.200 4" stroke="#111" stroke-width="1" fill="none"/><path d="M30.800 10.200l-3.400 12.200" stroke="#111" stroke-width="1" fill="none"/><circle cx="25.8" cy="27.4" r="1.9" fill="#f00"/></svg>
<div class="a" style="left:18px;top:518px;width:40px;height:40px;background:#b9b9b9;border:1px solid #8f8f8f;"></div>
<div class="t" style="left:23.75px;top:531.17px;font-size:13.5px;line-height:13.5px;color:#111;letter-spacing:0.243px;">Auto</div>
<div class="a" style="left:18px;top:566px;width:40px;height:40px;background:linear-gradient(#f7f6f5 0%,#e4e3e2 35%,#f3f2f1 100%);border:1px solid #8f8f8f;"></div><svg class="a" style="left:18px;top:566px;will-change:transform;" width="40" height="40" viewBox="0 0 40 40"><path d="M16.500 6.600V24.500H34.500" stroke="#111" stroke-width="1" fill="none"/><circle cx="31.2" cy="8.4" r="1.9" fill="#f00"/><text x="7" y="16" font-family="Liberation Sans" font-size="13" fill="#000">y</text><text x="27" y="35.400" font-family="Liberation Sans" font-size="13" fill="#000">x</text></svg>
<div class="a" style="left:58px;top:566px;width:40px;height:40px;background:linear-gradient(#f7f6f5 0%,#e4e3e2 35%,#f3f2f1 100%);border:1px solid #8f8f8f;"></div><svg class="a" style="left:58px;top:566px;will-change:transform;" width="40" height="40" viewBox="0 0 40 40"><path d="M6 30.200l19.400-19.600c5 4.600 7.600 11.600 8.200 19.600z" stroke="#111" stroke-width="1" fill="none"/><circle cx="25.4" cy="11" r="1.9" fill="#f00"/><text x="9.600" y="20.400" font-family="Liberation Sans" font-size="12" fill="#000">r</text><text x="20.800" y="28.200" font-family="Liberation Sans" font-size="12" fill="#000">a</text></svg>
<div class="a" style="left:18px;top:614px;width:40px;height:40px;background:linear-gradient(#f7f6f5 0%,#e4e3e2 35%,#f3f2f1 100%);border:1px solid #8f8f8f;"></div><svg class="a" style="left:18px;top:614px;will-change:transform;" width="40" height="40" viewBox="0 0 40 40"><path d="M10.600 10.200h18.400M10.600 10.200v18.600" stroke="#333" stroke-width="1" stroke-dasharray="1 1.600" fill="none"/><circle cx="29.200" cy="10.200" r="1.400" fill="#000"/><circle cx="10.600" cy="29" r="1.400" fill="#000"/><circle cx="10.6" cy="10.2" r="2.6" fill="#f00"/><text x="25.800" y="24.400" font-family="Liberation Sans" font-size="11.500" fill="#000">2</text><text x="14.600" y="33.600" font-family="Liberation Sans" font-size="11.500" fill="#000">1</text></svg>
<div class="a" style="left:58px;top:614px;width:40px;height:40px;background:linear-gradient(#f7f6f5 0%,#e4e3e2 35%,#f3f2f1 100%);border:1px solid #8f8f8f;"></div><svg class="a" style="left:58px;top:614px;will-change:transform;" width="40" height="40" viewBox="0 0 40 40"><path d="M10.200 29h18.600M28.600 10.200v18.600" stroke="#333" stroke-width="1" stroke-dasharray="1 1.600" fill="none"/><circle cx="28.600" cy="10.200" r="1.400" fill="#000"/><circle cx="10.200" cy="29" r="1.400" fill="#000"/><circle cx="28.6" cy="29" r="2.6" fill="#f00"/><text x="19.400" y="18.200" font-family="Liberation Sans" font-size="11.500" fill="#000">2</text><text x="7.800" y="26.400" font-family="Liberation Sans" font-size="11.500" fill="#000">1</text></svg>
<div class="a" style="left:18px;top:662px;width:40px;height:40px;background:linear-gradient(#f7f6f5 0%,#e4e3e2 35%,#f3f2f1 100%);border:1px solid #8f8f8f;"></div><svg class="a" style="left:18px;top:662px;" width="40" height="40" viewBox="0 0 40 40"><g stroke="#f4a6a6" stroke-width="0.900" fill="none"><path d="M10.400 9.400h22v20.600h-14.400l-2.600-4.600h-7.600v-11.600c0-2.400 1-3.800 2.600-4.400z"/><circle cx="15" cy="17" r="4"/><path d="M19.600 25.400h7.600v-8z"/></g><circle cx="19.6" cy="19.8" r="1.7" fill="#f00"/></svg>
<div class="a" style="left:18px;top:710px;width:40px;height:40px;background:#b9b9b9;border:1px solid #8f8f8f;"></div><svg class="a" style="left:18px;top:710px;" width="40" height="40" viewBox="0 0 40 40"><path d="M15.200 19.200h8.400M19.400 15v8.400" stroke="#000" stroke-width="1.200"/></svg>
<div class="a" style="left:58px;top:710px;width:40px;height:40px;background:linear-gradient(#f7f6f5 0%,#e4e3e2 35%,#f3f2f1 100%);border:1px solid #8f8f8f;"></div><svg class="a" style="left:58px;top:710px;" width="40" height="40" viewBox="0 0 40 40"><path d="M5.400 19.500h27.200M19.500 5.800v26.800" stroke="#111" stroke-width="1" fill="none"/><circle cx="19.5" cy="19.5" r="4.2" fill="none" stroke="#f00" stroke-width="1"/><path d="M15.3 19.5h8.4M19.5 15.3v8.4" stroke="#f00" stroke-width="1"/></svg>
<div class="a" style="left:18px;top:750px;width:40px;height:40px;background:linear-gradient(#f7f6f5 0%,#e4e3e2 35%,#f3f2f1 100%);border:1px solid #8f8f8f;"></div><svg class="a" style="left:18px;top:750px;" width="40" height="40" viewBox="0 0 40 40"><path d="M5.800 19.500h27.200" stroke="#111" stroke-width="1" fill="none"/><circle cx="19.5" cy="19.5" r="4.2" fill="none" stroke="#f00" stroke-width="1"/><path d="M15.3 19.5h8.4M19.5 15.3v8.4" stroke="#f00" stroke-width="1"/></svg>
<div class="a" style="left:58px;top:750px;width:40px;height:40px;background:linear-gradient(#f7f6f5 0%,#e4e3e2 35%,#f3f2f1 100%);border:1px solid #8f8f8f;"></div><svg class="a" style="left:58px;top:750px;" width="40" height="40" viewBox="0 0 40 40"><path d="M19.500 5.400v27.200" stroke="#111" stroke-width="1" fill="none"/><circle cx="19.5" cy="19.5" r="4.2" fill="none" stroke="#f00" stroke-width="1"/><path d="M15.3 19.5h8.4M19.5 15.3v8.4" stroke="#f00" stroke-width="1"/></svg>
<div class="a" style="left:18px;top:790px;width:40px;height:40px;background:linear-gradient(#f7f6f5 0%,#e4e3e2 35%,#f3f2f1 100%);border:1px solid #8f8f8f;"></div><svg class="a" style="left:18px;top:790px;" width="40" height="40" viewBox="0 0 40 40"><path d="M9.4 11.8L9.4 6.3M14.3 12.4L15.7 7.1M18.9 14.3L21.7 9.6M22.8 17.4L26.7 13.5M27.8 25.9L33.1 24.5M28.4 30.8L33.9 30.8" stroke="#a2a2a2" stroke-width="1.300" fill="none"/><path d="M9.400 30.800L32.200 18.300" stroke="#111" stroke-width="1.100"/><circle cx="9.4" cy="30.8" r="4.2" fill="none" stroke="#f00" stroke-width="1"/><path d="M5.2 30.8h8.4M9.4 26.6v8.4" stroke="#f00" stroke-width="1"/></svg>
<div class="a" style="left:18px;top:838px;width:40px;height:40px;background:linear-gradient(#f7f6f5 0%,#e4e3e2 35%,#f3f2f1 100%);border:1px solid #8f8f8f;"></div><svg class="a" style="left:18px;top:838px;" width="40" height="40" viewBox="0 0 40 40"><circle cx="15.6" cy="13.4" r="4.2" fill="none" stroke="#f00" stroke-width="1"/><path d="M11.399999999999999 13.4h8.4M15.6 9.2v8.4" stroke="#f00" stroke-width="1"/><path d="M18 16.800v11.200l2.800-2.400 2 4.600 2-0.900-2-4.500 3.600-0.300z" fill="#fff" stroke="#777" stroke-width="1" stroke-linejoin="round"/></svg>
<div class="a" style="left:58px;top:838px;width:40px;height:40px;background:linear-gradient(#f7f6f5 0%,#e4e3e2 35%,#f3f2f1 100%);border:1px solid #8f8f8f;"></div><svg class="a" style="left:58px;top:838px;" width="40" height="40" viewBox="0 0 40 40"><ellipse cx="12.200" cy="14.800" rx="3.300" ry="4.400" fill="none" stroke="#000" stroke-width="1.700"/><path d="M15.600 14.200h13v5.600h-2.400v-3h-1.200v2.400h-2v-2.400h-7.400z" fill="#000"/><circle cx="19" cy="28" r="4.2" fill="none" stroke="#f00" stroke-width="1"/><path d="M14.8 28h8.4M19 23.8v8.4" stroke="#f00" stroke-width="1"/></svg>
<!-- canvas -->
<div class="a" style="left:102px;top:145px;width:537px;height:31px;background:#efebe7;"></div>
<div class="a" style="left:102px;top:175px;width:536px;height:1px;background:#b3aea9;"></div>
<div class="a" style="left:102px;top:176px;width:536px;height:1px;background:#f8f6f4;"></div>
<div class="a" style="left:102px;top:145px;width:268px;height:31px;background:linear-gradient(#f8f6f4,#efebe7);border:1px solid #b9b4af;border-bottom:none;border-top:1px solid #d9d5d0;border-radius:3px 3px 0 0;"></div>
<svg class="a" style="left:114px;top:152px;" width="16" height="16" viewBox="0 0 16 16"><circle cx="7.200" cy="7.600" r="5.700" fill="#ececf2" stroke="#27367a" stroke-width="2.100"/>
<circle cx="7.200" cy="7.600" r="4.600" fill="none" stroke="#9aa3c8" stroke-width="0.600"/>
<path d="M7.200 3v9.200M2.600 7.600h9.200" stroke="#d06a6a" stroke-width="0.600"/>
<path d="M8.200 8.600l5.400 5.200" stroke="#e8a020" stroke-width="2.200" stroke-linecap="round"/><path d="M12.600 12.800l1.800 1.800" stroke="#d04040" stroke-width="1.800" stroke-linecap="round"/></svg>
<div class="t" style="left:178.20px;top:154.47px;font-size:13.5px;line-height:13.5px;color:#1a1a1a;letter-spacing:-0.305px;">* piramide su xz.dxf</div>
<svg class="a" style="left:339px;top:153px;" width="16" height="16" viewBox="0 0 16 16"><path d="M1.400 14L12.200 2L14.600 4Z" fill="#111"/><path d="M4 2.800L5.600 2L14.800 11.600L12.400 13.800Z" fill="#111"/><path d="M8 6.200l2 2.200-1.600 1.800-2.200-2.200z" fill="#111"/></svg>
<div class="a" style="left:102px;top:176px;width:537px;height:26px;background:#efebe7;"></div>
<div class="a" style="left:102px;top:202px;width:25px;height:679px;background:#efebe7;"></div>
<svg class="a" style="left:127px;top:202px;will-change:transform;" width="497" height="679" viewBox="0 0 497 679"><rect x="0" y="0" width="497" height="679" fill="#fff"/><path d="M4.0 673.5h1M4.0 652.5h1M4.0 631.5h1M4.0 610.5h1M4.0 590.5h1M4.0 569.5h1M4.0 548.5h1M4.0 527.5h1M4.0 506.5h1M4.0 485.5h1M4.0 465.5h1M4.0 444.5h1M4.0 423.5h1M4.0 402.5h1M4.0 381.5h1M4.0 360.5h1M4.0 340.5h1M4.0 319.5h1M4.0 298.5h1M4.0 277.5h1M4.0 256.5h1M4.0 235.5h1M4.0 215.5h1M4.0 194.5h1M4.0 173.5h1M4.0 152.5h1M4.0 131.5h1M4.0 110.5h1M4.0 90.5h1M4.0 69.5h1M4.0 48.5h1M4.0 27.5h1M4.0 6.5h1M25.0 673.5h1M25.0 652.5h1M25.0 631.5h1M25.0 610.5h1M25.0 590.5h1M25.0 569.5h1M25.0 548.5h1M25.0 527.5h1M25.0 506.5h1M25.0 485.5h1M25.0 465.5h1M25.0 444.5h1M25.0 423.5h1M25.0 402.5h1M25.0 381.5h1M25.0 360.5h1M25.0 340.5h1M25.0 319.5h1M25.0 298.5h1M25.0 277.5h1M25.0 256.5h1M25.0 235.5h1M25.0 215.5h1M25.0 194.5h1M25.0 173.5h1M25.0 152.5h1M25.0 131.5h1M25.0 110.5h1M25.0 90.5h1M25.0 69.5h1M25.0 48.5h1M25.0 27.5h1M25.0 6.5h1M46.0 673.5h1M46.0 652.5h1M46.0 631.5h1M46.0 610.5h1M46.0 590.5h1M46.0 569.5h1M46.0 548.5h1M46.0 527.5h1M46.0 506.5h1M46.0 485.5h1M46.0 465.5h1M46.0 444.5h1M46.0 423.5h1M46.0 402.5h1M46.0 381.5h1M46.0 360.5h1M46.0 340.5h1M46.0 319.5h1M46.0 298.5h1M46.0 277.5h1M46.0 256.5h1M46.0 235.5h1M46.0 215.5h1M46.0 194.5h1M46.0 173.5h1M46.0 152.5h1M46.0 131.5h1M46.0 110.5h1M46.0 90.5h1M46.0 69.5h1M46.0 48.5h1M46.0 27.5h1M46.0 6.5h1M66.0 673.5h1M66.0 652.5h1M66.0 631.5h1M66.0 610.5h1M66.0 590.5h1M66.0 569.5h1M66.0 548.5h1M66.0 527.5h1M66.0 506.5h1M66.0 485.5h1M66.0 465.5h1M66.0 444.5h1M66.0 423.5h1M66.0 402.5h1M66.0 381.5h1M66.0 360.5h1M66.0 340.5h1M66.0 319.5h1M66.0 298.5h1M66.0 277.5h1M66.0 256.5h1M66.0 235.5h1M66.0 215.5h1M66.0 194.5h1M66.0 173.5h1M66.0 152.5h1M66.0 131.5h1M66.0 110.5h1M66.0 90.5h1M66.0 69.5h1M66.0 48.5h1M66.0 27.5h1M66.0 6.5h1M87.0 673.5h1M87.0 652.5h1M87.0 631.5h1M87.0 610.5h1M87.0 590.5h1M87.0 569.5h1M87.0 548.5h1M87.0 527.5h1M87.0 506.5h1M87.0 485.5h1M87.0 465.5h1M87.0 444.5h1M87.0 423.5h1M87.0 402.5h1M87.0 381.5h1M87.0 360.5h1M87.0 340.5h1M87.0 319.5h1M87.0 298.5h1M87.0 277.5h1M87.0 256.5h1M87.0 235.5h1M87.0 215.5h1M87.0 194.5h1M87.0 173.5h1M87.0 152.5h1M87.0 131.5h1M87.0 110.5h1M87.0 90.5h1M87.0 69.5h1M87.0 48.5h1M87.0 27.5h1M87.0 6.5h1M108.0 673.5h1M108.0 652.5h1M108.0 631.5h1M108.0 610.5h1M108.0 590.5h1M108.0 569.5h1M108.0 548.5h1M108.0 527.5h1M108.0 506.5h1M108.0 485.5h1M108.0 465.5h1M108.0 444.5h1M108.0 423.5h1M108.0 402.5h1M108.0 381.5h1M108.0 360.5h1M108.0 340.5h1M108.0 319.5h1M108.0 298.5h1M108.0 277.5h1M108.0 256.5h1M108.0 235.5h1M108.0 215.5h1M108.0 194.5h1M108.0 173.5h1M108.0 152.5h1M108.0 131.5h1M108.0 110.5h1M108.0 90.5h1M108.0 69.5h1M108.0 48.5h1M108.0 27.5h1M108.0 6.5h1M129.0 673.5h1M129.0 652.5h1M129.0 631.5h1M129.0 610.5h1M129.0 590.5h1M129.0 569.5h1M129.0 548.5h1M129.0 527.5h1M129.0 506.5h1M129.0 485.5h1M129.0 465.5h1M129.0 444.5h1M129.0 423.5h1M129.0 402.5h1M129.0 381.5h1M129.0 360.5h1M129.0 340.5h1M129.0 319.5h1M129.0 298.5h1M129.0 277.5h1M129.0 256.5h1M129.0 235.5h1M129.0 215.5h1M129.0 194.5h1M129.0 173.5h1M129.0 152.5h1M129.0 131.5h1M129.0 110.5h1M129.0 90.5h1M129.0 69.5h1M129.0 48.5h1M129.0 27.5h1M129.0 6.5h1M150.0 673.5h1M150.0 652.5h1M150.0 631.5h1M150.0 610.5h1M150.0 590.5h1M150.0 569.5h1M150.0 548.5h1M150.0 527.5h1M150.0 506.5h1M150.0 485.5h1M150.0 465.5h1M150.0 444.5h1M150.0 423.5h1M150.0 402.5h1M150.0 381.5h1M150.0 360.5h1M150.0 340.5h1M150.0 319.5h1M150.0 298.5h1M150.0 277.5h1M150.0 256.5h1M150.0 235.5h1M150.0 215.5h1M150.0 194.5h1M150.0 173.5h1M150.0 152.5h1M150.0 131.5h1M150.0 110.5h1M150.0 90.5h1M150.0 69.5h1M150.0 48.5h1M150.0 27.5h1M150.0 6.5h1M171.0 673.5h1M171.0 652.5h1M171.0 631.5h1M171.0 610.5h1M171.0 590.5h1M171.0 569.5h1M171.0 548.5h1M171.0 527.5h1M171.0 506.5h1M171.0 485.5h1M171.0 465.5h1M171.0 444.5h1M171.0 423.5h1M171.0 402.5h1M171.0 381.5h1M171.0 360.5h1M171.0 340.5h1M171.0 319.5h1M171.0 298.5h1M171.0 277.5h1M171.0 256.5h1M171.0 235.5h1M171.0 215.5h1M171.0 194.5h1M171.0 173.5h1M171.0 152.5h1M171.0 131.5h1M171.0 110.5h1M171.0 90.5h1M171.0 69.5h1M171.0 48.5h1M171.0 27.5h1M171.0 6.5h1M191.0 673.5h1M191.0 652.5h1M191.0 631.5h1M191.0 610.5h1M191.0 590.5h1M191.0 569.5h1M191.0 548.5h1M191.0 527.5h1M191.0 506.5h1M191.0 485.5h1M191.0 465.5h1M191.0 444.5h1M191.0 423.5h1M191.0 402.5h1M191.0 381.5h1M191.0 360.5h1M191.0 340.5h1M191.0 319.5h1M191.0 298.5h1M191.0 277.5h1M191.0 256.5h1M191.0 235.5h1M191.0 215.5h1M191.0 194.5h1M191.0 173.5h1M191.0 152.5h1M191.0 131.5h1M191.0 110.5h1M191.0 90.5h1M191.0 69.5h1M191.0 48.5h1M191.0 27.5h1M191.0 6.5h1M212.0 673.5h1M212.0 652.5h1M212.0 631.5h1M212.0 610.5h1M212.0 590.5h1M212.0 569.5h1M212.0 548.5h1M212.0 527.5h1M212.0 506.5h1M212.0 485.5h1M212.0 465.5h1M212.0 444.5h1M212.0 423.5h1M212.0 402.5h1M212.0 381.5h1M212.0 360.5h1M212.0 340.5h1M212.0 319.5h1M212.0 298.5h1M212.0 277.5h1M212.0 256.5h1M212.0 235.5h1M212.0 215.5h1M212.0 194.5h1M212.0 173.5h1M212.0 152.5h1M212.0 131.5h1M212.0 110.5h1M212.0 90.5h1M212.0 69.5h1M212.0 48.5h1M212.0 27.5h1M212.0 6.5h1M233.0 673.5h1M233.0 652.5h1M233.0 631.5h1M233.0 610.5h1M233.0 590.5h1M233.0 569.5h1M233.0 548.5h1M233.0 527.5h1M233.0 506.5h1M233.0 485.5h1M233.0 465.5h1M233.0 444.5h1M233.0 423.5h1M233.0 402.5h1M233.0 381.5h1M233.0 360.5h1M233.0 340.5h1M233.0 319.5h1M233.0 298.5h1M233.0 277.5h1M233.0 256.5h1M233.0 235.5h1M233.0 215.5h1M233.0 194.5h1M233.0 173.5h1M233.0 152.5h1M233.0 131.5h1M233.0 110.5h1M233.0 90.5h1M233.0 69.5h1M233.0 48.5h1M233.0 27.5h1M233.0 6.5h1M254.0 673.5h1M254.0 652.5h1M254.0 631.5h1M254.0 610.5h1M254.0 590.5h1M254.0 569.5h1M254.0 548.5h1M254.0 527.5h1M254.0 506.5h1M254.0 485.5h1M254.0 465.5h1M254.0 444.5h1M254.0 423.5h1M254.0 402.5h1M254.0 381.5h1M254.0 360.5h1M254.0 340.5h1M254.0 319.5h1M254.0 298.5h1M254.0 277.5h1M254.0 256.5h1M254.0 235.5h1M254.0 215.5h1M254.0 194.5h1M254.0 173.5h1M254.0 152.5h1M254.0 131.5h1M254.0 110.5h1M254.0 90.5h1M254.0 69.5h1M254.0 48.5h1M254.0 27.5h1M254.0 6.5h1M275.0 673.5h1M275.0 652.5h1M275.0 631.5h1M275.0 610.5h1M275.0 590.5h1M275.0 569.5h1M275.0 548.5h1M275.0 527.5h1M275.0 506.5h1M275.0 485.5h1M275.0 465.5h1M275.0 444.5h1M275.0 423.5h1M275.0 402.5h1M275.0 381.5h1M275.0 360.5h1M275.0 340.5h1M275.0 319.5h1M275.0 298.5h1M275.0 277.5h1M275.0 256.5h1M275.0 235.5h1M275.0 215.5h1M275.0 194.5h1M275.0 173.5h1M275.0 152.5h1M275.0 131.5h1M275.0 110.5h1M275.0 90.5h1M275.0 69.5h1M275.0 48.5h1M275.0 27.5h1M275.0 6.5h1M296.0 673.5h1M296.0 652.5h1M296.0 631.5h1M296.0 610.5h1M296.0 590.5h1M296.0 569.5h1M296.0 548.5h1M296.0 527.5h1M296.0 506.5h1M296.0 485.5h1M296.0 465.5h1M296.0 444.5h1M296.0 423.5h1M296.0 402.5h1M296.0 381.5h1M296.0 360.5h1M296.0 340.5h1M296.0 319.5h1M296.0 298.5h1M296.0 277.5h1M296.0 256.5h1M296.0 235.5h1M296.0 215.5h1M296.0 194.5h1M296.0 173.5h1M296.0 152.5h1M296.0 131.5h1M296.0 110.5h1M296.0 90.5h1M296.0 69.5h1M296.0 48.5h1M296.0 27.5h1M296.0 6.5h1M316.0 673.5h1M316.0 652.5h1M316.0 631.5h1M316.0 610.5h1M316.0 590.5h1M316.0 569.5h1M316.0 548.5h1M316.0 527.5h1M316.0 506.5h1M316.0 485.5h1M316.0 465.5h1M316.0 444.5h1M316.0 423.5h1M316.0 402.5h1M316.0 381.5h1M316.0 360.5h1M316.0 340.5h1M316.0 319.5h1M316.0 298.5h1M316.0 277.5h1M316.0 256.5h1M316.0 235.5h1M316.0 215.5h1M316.0 194.5h1M316.0 173.5h1M316.0 152.5h1M316.0 131.5h1M316.0 110.5h1M316.0 90.5h1M316.0 69.5h1M316.0 48.5h1M316.0 27.5h1M316.0 6.5h1M337.0 673.5h1M337.0 652.5h1M337.0 631.5h1M337.0 610.5h1M337.0 590.5h1M337.0 569.5h1M337.0 548.5h1M337.0 527.5h1M337.0 506.5h1M337.0 485.5h1M337.0 465.5h1M337.0 444.5h1M337.0 423.5h1M337.0 402.5h1M337.0 381.5h1M337.0 360.5h1M337.0 340.5h1M337.0 319.5h1M337.0 298.5h1M337.0 277.5h1M337.0 256.5h1M337.0 235.5h1M337.0 215.5h1M337.0 194.5h1M337.0 173.5h1M337.0 152.5h1M337.0 131.5h1M337.0 110.5h1M337.0 90.5h1M337.0 69.5h1M337.0 48.5h1M337.0 27.5h1M337.0 6.5h1M358.0 673.5h1M358.0 652.5h1M358.0 631.5h1M358.0 610.5h1M358.0 590.5h1M358.0 569.5h1M358.0 548.5h1M358.0 527.5h1M358.0 506.5h1M358.0 485.5h1M358.0 465.5h1M358.0 444.5h1M358.0 423.5h1M358.0 402.5h1M358.0 381.5h1M358.0 360.5h1M358.0 340.5h1M358.0 319.5h1M358.0 298.5h1M358.0 277.5h1M358.0 256.5h1M358.0 235.5h1M358.0 215.5h1M358.0 194.5h1M358.0 173.5h1M358.0 152.5h1M358.0 131.5h1M358.0 110.5h1M358.0 90.5h1M358.0 69.5h1M358.0 48.5h1M358.0 27.5h1M358.0 6.5h1M379.0 673.5h1M379.0 652.5h1M379.0 631.5h1M379.0 610.5h1M379.0 590.5h1M379.0 569.5h1M379.0 548.5h1M379.0 527.5h1M379.0 506.5h1M379.0 485.5h1M379.0 465.5h1M379.0 444.5h1M379.0 423.5h1M379.0 402.5h1M379.0 381.5h1M379.0 360.5h1M379.0 340.5h1M379.0 319.5h1M379.0 298.5h1M379.0 277.5h1M379.0 256.5h1M379.0 235.5h1M379.0 215.5h1M379.0 194.5h1M379.0 173.5h1M379.0 152.5h1M379.0 131.5h1M379.0 110.5h1M379.0 90.5h1M379.0 69.5h1M379.0 48.5h1M379.0 27.5h1M379.0 6.5h1M400.0 673.5h1M400.0 652.5h1M400.0 631.5h1M400.0 610.5h1M400.0 590.5h1M400.0 569.5h1M400.0 548.5h1M400.0 527.5h1M400.0 506.5h1M400.0 485.5h1M400.0 465.5h1M400.0 444.5h1M400.0 423.5h1M400.0 402.5h1M400.0 381.5h1M400.0 360.5h1M400.0 340.5h1M400.0 319.5h1M400.0 298.5h1M400.0 277.5h1M400.0 256.5h1M400.0 235.5h1M400.0 215.5h1M400.0 194.5h1M400.0 173.5h1M400.0 152.5h1M400.0 131.5h1M400.0 110.5h1M400.0 90.5h1M400.0 69.5h1M400.0 48.5h1M400.0 27.5h1M400.0 6.5h1M421.0 673.5h1M421.0 652.5h1M421.0 631.5h1M421.0 610.5h1M421.0 590.5h1M421.0 569.5h1M421.0 548.5h1M421.0 527.5h1M421.0 506.5h1M421.0 485.5h1M421.0 465.5h1M421.0 444.5h1M421.0 423.5h1M421.0 402.5h1M421.0 381.5h1M421.0 360.5h1M421.0 340.5h1M421.0 319.5h1M421.0 298.5h1M421.0 277.5h1M421.0 256.5h1M421.0 235.5h1M421.0 215.5h1M421.0 194.5h1M421.0 173.5h1M421.0 152.5h1M421.0 131.5h1M421.0 110.5h1M421.0 90.5h1M421.0 69.5h1M421.0 48.5h1M421.0 27.5h1M421.0 6.5h1M441.0 673.5h1M441.0 652.5h1M441.0 631.5h1M441.0 610.5h1M441.0 590.5h1M441.0 569.5h1M441.0 548.5h1M441.0 527.5h1M441.0 506.5h1M441.0 485.5h1M441.0 465.5h1M441.0 444.5h1M441.0 423.5h1M441.0 402.5h1M441.0 381.5h1M441.0 360.5h1M441.0 340.5h1M441.0 319.5h1M441.0 298.5h1M441.0 277.5h1M441.0 256.5h1M441.0 235.5h1M441.0 215.5h1M441.0 194.5h1M441.0 173.5h1M441.0 152.5h1M441.0 131.5h1M441.0 110.5h1M441.0 90.5h1M441.0 69.5h1M441.0 48.5h1M441.0 27.5h1M441.0 6.5h1M462.0 673.5h1M462.0 652.5h1M462.0 631.5h1M462.0 610.5h1M462.0 590.5h1M462.0 569.5h1M462.0 548.5h1M462.0 527.5h1M462.0 506.5h1M462.0 485.5h1M462.0 465.5h1M462.0 444.5h1M462.0 423.5h1M462.0 402.5h1M462.0 381.5h1M462.0 360.5h1M462.0 340.5h1M462.0 319.5h1M462.0 298.5h1M462.0 277.5h1M462.0 256.5h1M462.0 235.5h1M462.0 215.5h1M462.0 194.5h1M462.0 173.5h1M462.0 152.5h1M462.0 131.5h1M462.0 110.5h1M462.0 90.5h1M462.0 69.5h1M462.0 48.5h1M462.0 27.5h1M462.0 6.5h1M483.0 673.5h1M483.0 652.5h1M483.0 631.5h1M483.0 610.5h1M483.0 590.5h1M483.0 569.5h1M483.0 548.5h1M483.0 527.5h1M483.0 506.5h1M483.0 485.5h1M483.0 465.5h1M483.0 444.5h1M483.0 423.5h1M483.0 402.5h1M483.0 381.5h1M483.0 360.5h1M483.0 340.5h1M483.0 319.5h1M483.0 298.5h1M483.0 277.5h1M483.0 256.5h1M483.0 235.5h1M483.0 215.5h1M483.0 194.5h1M483.0 173.5h1M483.0 152.5h1M483.0 131.5h1M483.0 110.5h1M483.0 90.5h1M483.0 69.5h1M483.0 48.5h1M483.0 27.5h1M483.0 6.5h1" stroke="#c8c8c8" stroke-width="1" fill="none" shape-rendering="crispEdges"/><path d="M25.5 0V679M233.5 0V679M441.5 0V679M0 652.5H497M0 444.5H497M0 235.5H497M0 27.5H497" stroke="#e6e6e6" stroke-width="1" fill="none" shape-rendering="crispEdges"/><path d="M483.5 0V679M0 298.5H497" stroke="#ffd466" stroke-width="1" stroke-dasharray="4 2" fill="none" shape-rendering="crispEdges"/><path d="M25.50 652.50L441.50 652.50L441.50 27.50L25.50 27.50Z M233.50 27.50L233.50 652.50 M25.50 444.50L441.50 444.50 M233.50 444.50L35.4 329.4 M233.50 444.50L432.4 329.4" stroke="#1c1c1c" stroke-width="1" fill="none" shape-rendering="crispEdges"/><path d="M4.50 652.50L46.50 652.50M25.50 673.50L25.50 631.50" stroke="#ff0000" stroke-width="1" fill="none" shape-rendering="crispEdges"/><path d="M257.6 487.7L358.4 465.5L412.2 553.4L343.2 631.0L248.3 590.6Z M257.6 487.7L377.7 592.2 M358.4 465.5L295.8 610.8" stroke="#ff8a14" stroke-width="1" fill="none"/><circle cx="377.7" cy="592.2" r="5" fill="none" stroke="#a02020" stroke-width="1"/><path d="M372.7 592.2h10M377.7 587.2v10" stroke="#a02020" stroke-width="1"/><text x="222.2" y="40.19999999999999" font-family="Liberation Sans" font-size="20.500" fill="#000">z</text><text x="27.400000000000006" y="327.20000000000005" font-family="Liberation Sans" font-size="21.500" fill="#000">x</text><text x="425" y="322" font-family="Liberation Sans" font-size="21.500" fill="#000">y</text></svg>
<svg class="a" style="left:102px;top:176px;" width="537" height="26" viewBox="0 0 537 26"><path d="M29.5 23v3M50.5 19.5v6.500M71.5 23v3M91.5 19.5v6.500M112.5 23v3M133.5 19.5v6.500M154.5 23v3M175.5 19.5v6.500M196.5 23v3M216.5 19.5v6.500M237.5 23v3M258.5 19.5v6.500M279.5 23v3M300.5 19.5v6.500M321.5 23v3M341.5 19.5v6.500M362.5 23v3M383.5 19.5v6.500M404.5 23v3M425.5 19.5v6.500M446.5 23v3M466.5 19.5v6.500M487.5 23v3M508.5 19.5v6.500" stroke="#000" stroke-width="1.100" fill="none"/><path d="M505.7 19h5.600l-2.800 2.800z" fill="#000"/><path d="M508.5 20v6" stroke="#000" stroke-width="1.300"/></svg>
<div class="t" style="left:148.86px;top:180.14px;font-size:12px;line-height:12px;color:#1a1a1a;">0</div>
<div class="t" style="left:186.75px;top:180.14px;font-size:12px;line-height:12px;color:#1a1a1a;letter-spacing:-0.448px;">20</div>
<div class="t" style="left:228.75px;top:180.14px;font-size:12px;line-height:12px;color:#1a1a1a;letter-spacing:-0.448px;">40</div>
<div class="t" style="left:270.75px;top:180.14px;font-size:12px;line-height:12px;color:#1a1a1a;letter-spacing:-0.448px;">60</div>
<div class="t" style="left:311.75px;top:180.14px;font-size:12px;line-height:12px;color:#1a1a1a;letter-spacing:-0.448px;">80</div>
<div class="t" style="left:350.35px;top:180.14px;font-size:12px;line-height:12px;color:#1a1a1a;letter-spacing:-0.161px;">100</div>
<div class="t" style="left:392.35px;top:180.14px;font-size:12px;line-height:12px;color:#1a1a1a;letter-spacing:-0.161px;">120</div>
<div class="t" style="left:433.35px;top:180.14px;font-size:12px;line-height:12px;color:#1a1a1a;letter-spacing:-0.161px;">140</div>
<div class="t" style="left:475.35px;top:180.14px;font-size:12px;line-height:12px;color:#1a1a1a;letter-spacing:-0.161px;">160</div>
<div class="t" style="left:517.35px;top:180.14px;font-size:12px;line-height:12px;color:#1a1a1a;letter-spacing:-0.161px;">180</div>
<div class="t" style="left:558.35px;top:180.14px;font-size:12px;line-height:12px;color:#1a1a1a;letter-spacing:-0.161px;">200</div>
<div class="t" style="left:600.35px;top:180.14px;font-size:12px;line-height:12px;color:#1a1a1a;letter-spacing:-0.161px;">220</div>
<svg class="a" style="left:102px;top:202px;" width="25" height="679" viewBox="0 0 25 679"><path d="M22 673.5h3M18.500 652.5h6.500M22 631.5h3M18.500 610.5h6.500M22 590.5h3M18.500 569.5h6.500M22 548.5h3M18.500 527.5h6.500M22 506.5h3M18.500 485.5h6.500M22 465.5h3M18.500 444.5h6.500M22 423.5h3M18.500 402.5h6.500M22 381.5h3M18.500 360.5h6.500M22 340.5h3M18.500 319.5h6.500M22 298.5h3M18.500 277.5h6.500M22 256.5h3M18.500 235.5h6.500M22 215.5h3M18.500 194.5h6.500M22 173.5h3M18.500 152.5h6.500M22 131.5h3M18.500 110.5h6.500M22 90.5h3M18.500 69.5h6.500M22 48.5h3M18.500 27.5h6.500M22 6.5h3" stroke="#000" stroke-width="1.100" fill="none"/><path d="M18.500 295.7v5.600l2.800-2.800z" fill="#000"/><path d="M19.500 298.5h5.500" stroke="#000" stroke-width="1.300"/></svg>
<div class="t" style="left:80.6px;top:848.1px;width:60px;height:12px;text-align:center;font-size:12px;line-height:12px;color:#1a1a1a;transform:rotate(-90deg);letter-spacing:-0.25px;will-change:transform;">0</div>
<div class="t" style="left:80.6px;top:806.1px;width:60px;height:12px;text-align:center;font-size:12px;line-height:12px;color:#1a1a1a;transform:rotate(-90deg);letter-spacing:-0.25px;will-change:transform;">20</div>
<div class="t" style="left:80.6px;top:765.1px;width:60px;height:12px;text-align:center;font-size:12px;line-height:12px;color:#1a1a1a;transform:rotate(-90deg);letter-spacing:-0.25px;will-change:transform;">40</div>
<div class="t" style="left:80.6px;top:723.1px;width:60px;height:12px;text-align:center;font-size:12px;line-height:12px;color:#1a1a1a;transform:rotate(-90deg);letter-spacing:-0.25px;will-change:transform;">60</div>
<div class="t" style="left:80.6px;top:681.1px;width:60px;height:12px;text-align:center;font-size:12px;line-height:12px;color:#1a1a1a;transform:rotate(-90deg);letter-spacing:-0.25px;will-change:transform;">80</div>
<div class="t" style="left:80.6px;top:640.1px;width:60px;height:12px;text-align:center;font-size:12px;line-height:12px;color:#1a1a1a;transform:rotate(-90deg);letter-spacing:-0.25px;will-change:transform;">100</div>
<div class="t" style="left:80.6px;top:598.1px;width:60px;height:12px;text-align:center;font-size:12px;line-height:12px;color:#1a1a1a;transform:rotate(-90deg);letter-spacing:-0.25px;will-change:transform;">120</div>
<div class="t" style="left:80.6px;top:556.1px;width:60px;height:12px;text-align:center;font-size:12px;line-height:12px;color:#1a1a1a;transform:rotate(-90deg);letter-spacing:-0.25px;will-change:transform;">140</div>
<div class="t" style="left:80.6px;top:515.1px;width:60px;height:12px;text-align:center;font-size:12px;line-height:12px;color:#1a1a1a;transform:rotate(-90deg);letter-spacing:-0.25px;will-change:transform;">160</div>
<div class="t" style="left:80.6px;top:473.1px;width:60px;height:12px;text-align:center;font-size:12px;line-height:12px;color:#1a1a1a;transform:rotate(-90deg);letter-spacing:-0.25px;will-change:transform;">180</div>
<div class="t" style="left:80.6px;top:431.1px;width:60px;height:12px;text-align:center;font-size:12px;line-height:12px;color:#1a1a1a;transform:rotate(-90deg);letter-spacing:-0.25px;will-change:transform;">200</div>
<div class="t" style="left:80.6px;top:390.1px;width:60px;height:12px;text-align:center;font-size:12px;line-height:12px;color:#1a1a1a;transform:rotate(-90deg);letter-spacing:-0.25px;will-change:transform;">220</div>
<div class="t" style="left:80.6px;top:348.1px;width:60px;height:12px;text-align:center;font-size:12px;line-height:12px;color:#1a1a1a;transform:rotate(-90deg);letter-spacing:-0.25px;will-change:transform;">240</div>
<div class="t" style="left:80.6px;top:306.1px;width:60px;height:12px;text-align:center;font-size:12px;line-height:12px;color:#1a1a1a;transform:rotate(-90deg);letter-spacing:-0.25px;will-change:transform;">260</div>
<div class="t" style="left:80.6px;top:265.1px;width:60px;height:12px;text-align:center;font-size:12px;line-height:12px;color:#1a1a1a;transform:rotate(-90deg);letter-spacing:-0.25px;will-change:transform;">280</div>
<div class="t" style="left:80.6px;top:223.1px;width:60px;height:12px;text-align:center;font-size:12px;line-height:12px;color:#1a1a1a;transform:rotate(-90deg);letter-spacing:-0.25px;will-change:transform;">300</div>
<div class="a" style="left:624px;top:202px;width:14px;height:678px;background:#e0deda;border-left:1px solid #b6b2ad;"></div>
<div class="a" style="left:625px;top:202px;width:13px;height:13px;background:#f6f4f2;"></div>
<div class="a" style="left:625px;top:215px;width:13px;height:1px;background:#b6b2ad;"></div>
<svg class="a" style="left:625px;top:202px;" width="13" height="13" viewBox="0 0 13 13"><path d="M2.400 8.900h8.200l-4.100-4.400z" fill="#555"/></svg>
<div class="a" style="left:625px;top:867px;width:13px;height:13px;background:#f6f4f2;"></div>
<div class="a" style="left:625px;top:866px;width:13px;height:1px;background:#b6b2ad;"></div>
<svg class="a" style="left:625px;top:867px;" width="13" height="13" viewBox="0 0 13 13"><path d="M2.400 4h8.200l-4.100 4.400z" fill="#555"/></svg>
<div class="a" style="left:625px;top:441px;width:13px;height:199px;background:linear-gradient(90deg,#fbfaf9,#efedea);border-top:1px solid #b6b2ad;border-bottom:1px solid #b6b2ad;"></div>
<div class="a" style="left:570px;top:880px;width:54px;height:1px;background:#efebe7;"></div>
<div class="a" style="left:127px;top:881px;width:443px;height:1px;background:#b6b2ad;"></div>
<div class="a" style="left:127px;top:882px;width:443px;height:13px;background:#e0deda;"></div>
<div class="a" style="left:127px;top:882px;width:13px;height:13px;background:#f6f4f2;"></div>
<div class="a" style="left:140px;top:882px;width:1px;height:13px;background:#b6b2ad;"></div>
<svg class="a" style="left:127px;top:882px;" width="13" height="13" viewBox="0 0 13 13"><path d="M8.400 2.400v8.200l-4.400-4.100z" fill="#555"/></svg>
<div class="a" style="left:557px;top:882px;width:13px;height:13px;background:#f6f4f2;"></div>
<div class="a" style="left:556px;top:882px;width:1px;height:13px;background:#b6b2ad;"></div>
<svg class="a" style="left:557px;top:882px;" width="13" height="13" viewBox="0 0 13 13"><path d="M4.400 2.400v8.200l4.400-4.100z" fill="#555"/></svg>
<div class="a" style="left:300px;top:882px;width:104px;height:13px;background:linear-gradient(#fbfaf9,#efedea);border-left:1px solid #b6b2ad;border-right:1px solid #b6b2ad;"></div>
<div class="t" style="left:591.70px;top:882.72px;font-size:12.5px;line-height:12.5px;color:#1a1a1a;letter-spacing:-0.358px;">10 &lt; 100</div>
<div class="a" style="left:363px;top:899px;width:1px;height:1px;background:#b3aea8;"></div>
<div class="a" style="left:366px;top:899px;width:1px;height:1px;background:#b3aea8;"></div>
<div class="a" style="left:369px;top:899px;width:1px;height:1px;background:#b3aea8;"></div>
<div class="a" style="left:372px;top:899px;width:1px;height:1px;background:#b3aea8;"></div>
<div class="a" style="left:375px;top:899px;width:1px;height:1px;background:#b3aea8;"></div>
<div class="a" style="left:378px;top:899px;width:1px;height:1px;background:#b3aea8;"></div>
<!-- panels -->
<div class="a" style="left:641px;top:558px;width:1px;height:1px;background:#b3aea8;"></div>
<div class="a" style="left:641px;top:561px;width:1px;height:1px;background:#b3aea8;"></div>
<div class="a" style="left:641px;top:564px;width:1px;height:1px;background:#b3aea8;"></div>
<div class="a" style="left:641px;top:567px;width:1px;height:1px;background:#b3aea8;"></div>
<div class="a" style="left:641px;top:570px;width:1px;height:1px;background:#b3aea8;"></div>
<div class="a" style="left:641px;top:573px;width:1px;height:1px;background:#b3aea8;"></div>
<div class="t" style="left:648.50px;top:147.87px;font-size:13.5px;line-height:13.5px;color:#1a1a1a;letter-spacing:-0.670px;">Layer List</div>
<div class="a" style="left:862px;top:149px;width:11px;height:11px;border:1px solid #7a7a7a;border-radius:2px;"></div><svg class="a" style="left:862px;top:149px;" width="11" height="11" viewBox="0 0 11 11"><rect x="4.500" y="2.500" width="4" height="4" fill="none" stroke="#555" stroke-width="0.900"/><rect x="2.500" y="4.500" width="4" height="4" fill="#efebe7" stroke="#555" stroke-width="0.900"/></svg><div class="a" style="left:876px;top:149px;width:11px;height:11px;border:1px solid #7a7a7a;border-radius:2px;"></div><svg class="a" style="left:876px;top:149px;" width="11" height="11" viewBox="0 0 11 11"><path d="M2.800 2.800l5.400 5.400M8.200 2.800l-5.400 5.400" stroke="#333" stroke-width="1.700"/></svg>
<div class="a" style="left:644px;top:164px;width:48px;height:22px;background:linear-gradient(#fbfaf9,#edebe8);border:1px solid #b4afa9;border-radius:3px;"></div>
<div class="a" style="left:693px;top:164px;width:48px;height:22px;background:linear-gradient(#fbfaf9,#edebe8);border:1px solid #b4afa9;border-radius:3px;"></div>
<div class="a" style="left:742px;top:164px;width:48px;height:22px;background:linear-gradient(#fbfaf9,#edebe8);border:1px solid #b4afa9;border-radius:3px;"></div>
<div class="a" style="left:791px;top:164px;width:48px;height:22px;background:linear-gradient(#fbfaf9,#edebe8);border:1px solid #b4afa9;border-radius:3px;"></div>
<div class="a" style="left:840px;top:164px;width:48px;height:22px;background:linear-gradient(#fbfaf9,#edebe8);border:1px solid #b4afa9;border-radius:3px;"></div>
<svg class="a" style="left:660px;top:170px;" width="16.3" height="11.6" viewBox="0 0 15.5 11"><path d="M0.300 5.300C1.500 2 4.500 0.200 8 0.200C11.500 0.200 14 2 15.200 5.700C14 8.700 11.500 10.800 7.600 10.800C4 10.800 1.500 8.600 0.300 5.300Z" fill="#000"/>
<path d="M2.500 5.700C4 3.800 6 3 8 3C10 3 12 3.900 13.100 5.700C12 7.800 10 9.100 7.800 9.100C5.500 9.100 3.700 7.800 2.500 5.700Z" fill="#fff"/>
<circle cx="7.900" cy="5" r="3" fill="#000"/><circle cx="6.900" cy="4.100" r="0.850" fill="#fff"/></svg>
<svg class="a" style="left:709px;top:170px;" width="16.3" height="11.6" viewBox="0 0 15.5 11"><path d="M0.300 5.300C1.500 2 4.500 0.200 8 0.200C11.500 0.200 14 2 15.200 5.700C14 8.700 11.500 10.800 7.600 10.800C4 10.800 1.500 8.600 0.300 5.300Z" fill="#b0b0b0"/>
<path d="M2.500 5.700C4 3.800 6 3 8 3C10 3 12 3.900 13.100 5.700C12 7.800 10 9.100 7.800 9.100C5.500 9.100 3.700 7.800 2.500 5.700Z" fill="#f2f1ef"/>
<circle cx="7.900" cy="5" r="3" fill="#b0b0b0"/><circle cx="6.900" cy="4.100" r="0.850" fill="#f2f1ef"/></svg>
<svg class="a" style="left:759px;top:168px;" width="14" height="14" viewBox="0 0 14 14"><path d="M7 1.400v11.200M1.400 7h11.200" stroke="#b40000" stroke-width="3"/><path d="M7 1.900v10.200M1.900 7h10.200" stroke="#ff1010" stroke-width="1.800"/></svg>
<svg class="a" style="left:808px;top:168px;" width="14" height="14" viewBox="0 0 14 14"><path d="M1.400 7h11.200" stroke="#b40000" stroke-width="3"/><path d="M1.900 7h10.200" stroke="#ff1010" stroke-width="1.800"/></svg>
<svg class="a" style="left:855px;top:166px;" width="18" height="18" viewBox="0 0 18 18"><path d="M1.600 16.200l1.400-4.200 10.400-10.200 2.800 2.800-10.400 10.200z" fill="#e9b44c" stroke="#9a6a1c" stroke-width="0.700"/><path d="M13.400 1.800l2.800 2.800 0.800-0.800a1.200 1.200 0 0 0 0-1.800l-1-1a1.200 1.200 0 0 0-1.800 0z" fill="#e23a3a"/><path d="M1.600 16.200l1.400-4.200 2.800 2.800z" fill="#6a4a1a"/></svg>
<div class="a" style="left:644px;top:187px;width:245px;height:447px;background:#fff;border:1px solid #aca7a1;"></div>
<div class="a" style="left:645px;top:205px;width:243px;height:17px;background:#308cc6;"></div>
<svg class="a" style="left:648.3px;top:191px;" width="15.5" height="11.0" viewBox="0 0 15.5 11"><path d="M0.300 5.300C1.500 2 4.500 0.200 8 0.200C11.500 0.200 14 2 15.200 5.700C14 8.700 11.500 10.800 7.600 10.800C4 10.800 1.500 8.600 0.300 5.300Z" fill="#000"/>
<path d="M2.500 5.700C4 3.800 6 3 8 3C10 3 12 3.900 13.100 5.700C12 7.800 10 9.100 7.800 9.100C5.500 9.100 3.700 7.800 2.500 5.700Z" fill="#fff"/>
<circle cx="7.900" cy="5" r="3" fill="#000"/><circle cx="6.900" cy="4.100" r="0.850" fill="#fff"/></svg>
<svg class="a" style="left:667.4px;top:188.5px;" width="11" height="15" viewBox="0 0 11 15"><path d="M2.300 6.800v-2.400a3.200 3.200 0 0 1 6.400 0v2.400" fill="none" stroke="#b9b9b9" stroke-width="1.300"/><rect x="0.500" y="6.400" width="10" height="7.800" fill="#a9a9a9"/></svg>
<div class="t" style="left:686.00px;top:189.77px;font-size:13.5px;line-height:13.5px;color:#1a1a1a;">0</div>
<svg class="a" style="left:648.3px;top:208px;" width="15.5" height="11.0" viewBox="0 0 15.5 11"><path d="M0.300 5.300C1.500 2 4.500 0.200 8 0.200C11.500 0.200 14 2 15.200 5.700C14 8.700 11.500 10.800 7.600 10.800C4 10.800 1.500 8.600 0.300 5.300Z" fill="#0d2f49"/>
<path d="M2.500 5.700C4 3.800 6 3 8 3C10 3 12 3.900 13.100 5.700C12 7.800 10 9.100 7.800 9.100C5.500 9.100 3.700 7.800 2.500 5.700Z" fill="#308cc6"/>
<circle cx="7.900" cy="5" r="3" fill="#0d2f49"/><circle cx="6.900" cy="4.100" r="0.850" fill="#308cc6"/></svg>
<svg class="a" style="left:667.4px;top:205.5px;" width="11" height="15" viewBox="0 0 11 15"><path d="M2.300 6.800v-2.400a3.200 3.200 0 0 1 6.400 0v2.400" fill="none" stroke="#7fa0b6" stroke-width="1.300"/><rect x="0.500" y="6.400" width="10" height="7.800" fill="#8a98a1"/></svg>
<div class="t" style="left:686.00px;top:206.77px;font-size:13.5px;line-height:13.5px;color:#fff;letter-spacing:-0.516px;">3h</div>
<svg class="a" style="left:648.3px;top:225px;" width="15.5" height="11.0" viewBox="0 0 15.5 11"><path d="M0.300 5.300C1.500 2 4.500 0.200 8 0.200C11.500 0.200 14 2 15.200 5.700C14 8.700 11.500 10.800 7.600 10.800C4 10.800 1.500 8.600 0.300 5.300Z" fill="#000"/>
<path d="M2.500 5.700C4 3.800 6 3 8 3C10 3 12 3.900 13.100 5.700C12 7.800 10 9.100 7.800 9.100C5.500 9.100 3.700 7.800 2.500 5.700Z" fill="#fff"/>
<circle cx="7.900" cy="5" r="3" fill="#000"/><circle cx="6.900" cy="4.100" r="0.850" fill="#fff"/></svg>
<svg class="a" style="left:667.4px;top:222.5px;" width="11" height="15" viewBox="0 0 11 15"><path d="M2.300 6.800v-2.400a3.200 3.200 0 0 1 6.400 0v2.400" fill="none" stroke="#b9b9b9" stroke-width="1.300"/><rect x="0.500" y="6.400" width="10" height="7.800" fill="#a9a9a9"/></svg>
<div class="t" style="left:686.00px;top:223.77px;font-size:13.5px;line-height:13.5px;color:#1a1a1a;letter-spacing:-0.038px;">3h-tratt</div>
<svg class="a" style="left:648.3px;top:242px;" width="15.5" height="11.0" viewBox="0 0 15.5 11"><path d="M0.300 5.300C1.500 2 4.500 0.200 8 0.200C11.500 0.200 14 2 15.200 5.700C14 8.700 11.500 10.800 7.600 10.800C4 10.800 1.500 8.600 0.300 5.300Z" fill="#000"/>
<path d="M2.500 5.700C4 3.800 6 3 8 3C10 3 12 3.900 13.100 5.700C12 7.800 10 9.100 7.800 9.100C5.500 9.100 3.700 7.800 2.500 5.700Z" fill="#fff"/>
<circle cx="7.900" cy="5" r="3" fill="#000"/><circle cx="6.900" cy="4.100" r="0.850" fill="#fff"/></svg>
<svg class="a" style="left:667.4px;top:239.5px;" width="11" height="15" viewBox="0 0 11 15"><path d="M2.300 6.800v-2.400a3.200 3.200 0 0 1 6.400 0v2.400" fill="none" stroke="#b9b9b9" stroke-width="1.300"/><rect x="0.500" y="6.400" width="10" height="7.800" fill="#a9a9a9"/></svg>
<div class="t" style="left:686.00px;top:240.77px;font-size:13.5px;line-height:13.5px;color:#1a1a1a;letter-spacing:-0.516px;">hb</div>
<svg class="a" style="left:648.3px;top:259px;" width="15.5" height="11.0" viewBox="0 0 15.5 11"><path d="M0.300 5.300C1.500 2 4.500 0.200 8 0.200C11.500 0.200 14 2 15.200 5.700C14 8.700 11.500 10.800 7.600 10.800C4 10.800 1.500 8.600 0.300 5.300Z" fill="#000"/>
<path d="M2.500 5.700C4 3.800 6 3 8 3C10 3 12 3.900 13.100 5.700C12 7.800 10 9.100 7.800 9.100C5.500 9.100 3.700 7.800 2.500 5.700Z" fill="#fff"/>
<circle cx="7.900" cy="5" r="3" fill="#000"/><circle cx="6.900" cy="4.100" r="0.850" fill="#fff"/></svg>
<svg class="a" style="left:667.4px;top:256.5px;" width="11" height="15" viewBox="0 0 11 15"><path d="M2.300 6.800v-2.400a3.200 3.200 0 0 1 6.400 0v2.400" fill="none" stroke="#b9b9b9" stroke-width="1.300"/><rect x="0.500" y="6.400" width="10" height="7.800" fill="#a9a9a9"/></svg>
<div class="t" style="left:686.00px;top:257.77px;font-size:13.5px;line-height:13.5px;color:#1a1a1a;letter-spacing:0.004px;">hb-tratt</div>
<svg class="a" style="left:648.3px;top:276px;" width="15.5" height="11.0" viewBox="0 0 15.5 11"><path d="M0.300 5.300C1.500 2 4.500 0.200 8 0.200C11.500 0.200 14 2 15.200 5.700C14 8.700 11.500 10.800 7.600 10.800C4 10.800 1.500 8.600 0.300 5.300Z" fill="#000"/>
<path d="M2.500 5.700C4 3.800 6 3 8 3C10 3 12 3.900 13.100 5.700C12 7.800 10 9.100 7.800 9.100C5.500 9.100 3.700 7.800 2.500 5.700Z" fill="#fff"/>
<circle cx="7.900" cy="5" r="3" fill="#000"/><circle cx="6.900" cy="4.100" r="0.850" fill="#fff"/></svg>
<svg class="a" style="left:667.4px;top:273.5px;" width="11" height="15" viewBox="0 0 11 15"><path d="M2.300 6.800v-2.400a3.200 3.200 0 0 1 6.400 0v2.400" fill="none" stroke="#b9b9b9" stroke-width="1.300"/><rect x="0.500" y="6.400" width="10" height="7.800" fill="#a9a9a9"/></svg>
<div class="t" style="left:686.00px;top:274.77px;font-size:13.5px;line-height:13.5px;color:#1a1a1a;letter-spacing:-0.071px;">quote</div>
<div class="a" style="left:760px;top:636px;width:1px;height:1px;background:#b3aea8;"></div>
<div class="a" style="left:763px;top:636px;width:1px;height:1px;background:#b3aea8;"></div>
<div class="a" style="left:766px;top:636px;width:1px;height:1px;background:#b3aea8;"></div>
<div class="a" style="left:769px;top:636px;width:1px;height:1px;background:#b3aea8;"></div>
<div class="a" style="left:772px;top:636px;width:1px;height:1px;background:#b3aea8;"></div>
<div class="a" style="left:775px;top:636px;width:1px;height:1px;background:#b3aea8;"></div>
<div class="t" style="left:648.30px;top:642.57px;font-size:13.5px;line-height:13.5px;color:#1a1a1a;letter-spacing:-0.396px;">Property Editor</div>
<div class="a" style="left:862px;top:644px;width:11px;height:11px;border:1px solid #7a7a7a;border-radius:2px;"></div><svg class="a" style="left:862px;top:644px;" width="11" height="11" viewBox="0 0 11 11"><rect x="4.500" y="2.500" width="4" height="4" fill="none" stroke="#555" stroke-width="0.900"/><rect x="2.500" y="4.500" width="4" height="4" fill="#efebe7" stroke="#555" stroke-width="0.900"/></svg><div class="a" style="left:876px;top:644px;width:11px;height:11px;border:1px solid #7a7a7a;border-radius:2px;"></div><svg class="a" style="left:876px;top:644px;" width="11" height="11" viewBox="0 0 11 11"><path d="M2.800 2.800l5.400 5.400M8.200 2.800l-5.400 5.400" stroke="#333" stroke-width="1.700"/></svg>
<div class="a" style="left:644px;top:659px;width:246px;height:322px;border:1px solid #aca7a1;"></div>
<div class="t" style="left:654.70px;top:674.57px;font-size:13.5px;line-height:13.5px;color:#1a1a1a;letter-spacing:-0.532px;">Selection:</div>
<div class="a" style="left:715px;top:669px;width:164px;height:25px;background:linear-gradient(#fbfaf9,#edebe8);border:1px solid #b4afa9;border-radius:3px;"></div>
<div class="t" style="left:720.00px;top:674.57px;font-size:13.5px;line-height:13.5px;color:#1a1a1a;letter-spacing:-0.549px;">No Selection</div>
<svg class="a" style="left:863px;top:678.5px;" width="10" height="7" viewBox="0 0 10 7"><path d="M1 1.400h8l-4 4.400z" fill="#444"/></svg>
<div class="t" style="left:654.70px;top:702.57px;font-size:13.5px;line-height:13.5px;color:#bab6b1;letter-spacing:-0.518px;">General Properties</div>
<div class="a" style="left:655px;top:721px;width:224px;height:203px;border:1px solid #d5d1cc;border-radius:2px;"></div>
<div class="t" style="left:714.00px;top:734.97px;font-size:13.5px;line-height:13.5px;color:#bab6b1;letter-spacing:-0.404px;">Layer:</div>
<div class="a" style="left:756px;top:730px;width:111px;height:24px;background:linear-gradient(#f8f7f5,#efedea);border:1px solid #c4bfb9;border-radius:3px;"></div>
<svg class="a" style="left:851px;top:739.5px;" width="9" height="6" viewBox="0 0 9 6"><path d="M0.800 1h7.400l-3.700 4z" fill="#d0ccc7"/></svg>
<div class="t" style="left:716.50px;top:761.97px;font-size:13.5px;line-height:13.5px;color:#bab6b1;letter-spacing:-0.602px;">Color:</div>
<div class="a" style="left:756px;top:757px;width:111px;height:24px;background:linear-gradient(#f8f7f5,#efedea);border:1px solid #c4bfb9;border-radius:3px;"></div>
<svg class="a" style="left:851px;top:766.5px;" width="9" height="6" viewBox="0 0 9 6"><path d="M0.800 1h7.400l-3.700 4z" fill="#d0ccc7"/></svg>
<div class="t" style="left:685.00px;top:788.97px;font-size:13.5px;line-height:13.5px;color:#bab6b1;letter-spacing:-0.380px;">Lineweight:</div>
<div class="a" style="left:756px;top:784px;width:111px;height:24px;background:linear-gradient(#f8f7f5,#efedea);border:1px solid #c4bfb9;border-radius:3px;"></div>
<svg class="a" style="left:851px;top:793.5px;" width="9" height="6" viewBox="0 0 9 6"><path d="M0.800 1h7.400l-3.700 4z" fill="#d0ccc7"/></svg>
<div class="t" style="left:698.50px;top:815.97px;font-size:13.5px;line-height:13.5px;color:#bab6b1;letter-spacing:-0.474px;">Linetype:</div>
<div class="a" style="left:756px;top:811px;width:111px;height:24px;background:linear-gradient(#f8f7f5,#efedea);border:1px solid #c4bfb9;border-radius:3px;"></div>
<svg class="a" style="left:851px;top:820.5px;" width="9" height="6" viewBox="0 0 9 6"><path d="M0.800 1h7.400l-3.700 4z" fill="#d0ccc7"/></svg>
<div class="t" style="left:665.50px;top:842.97px;font-size:13.5px;line-height:13.5px;color:#bab6b1;letter-spacing:-0.594px;">Linetype Scale:</div>
<div class="a" style="left:756px;top:838px;width:111px;height:24px;border:1px solid #b9b4ae;border-radius:3px;box-shadow:inset 0 1px 1px #d6d2cd;"></div>
<div class="t" style="left:680.00px;top:869.97px;font-size:13.5px;line-height:13.5px;color:#bab6b1;letter-spacing:-0.401px;">Draw Order:</div>
<div class="a" style="left:756px;top:865px;width:111px;height:24px;border:1px solid #b9b4ae;border-radius:3px;box-shadow:inset 0 1px 1px #d6d2cd;"></div>
<div class="t" style="left:706.50px;top:896.97px;font-size:13.5px;line-height:13.5px;color:#bab6b1;letter-spacing:-0.588px;">Handle:</div>
<div class="a" style="left:756px;top:892px;width:111px;height:24px;border:1px solid #b9b4ae;border-radius:3px;box-shadow:inset 0 1px 1px #d6d2cd;"></div>
<div class="a" style="left:762px;top:762px;width:16px;height:10px;background:#fff;border:1px solid #555;"></div>
<div class="t" style="left:781.30px;top:761.97px;font-size:13.5px;line-height:13.5px;color:#bab6b1;letter-spacing:-0.825px;">By Layer</div>
<div class="a" style="left:762px;top:795px;width:16px;height:1px;background:#555;"></div>
<div class="t" style="left:781.30px;top:788.97px;font-size:13.5px;line-height:13.5px;color:#bab6b1;letter-spacing:-0.825px;">By Layer</div>
<div class="t" style="left:761.30px;top:815.97px;font-size:13.5px;line-height:13.5px;color:#bab6b1;letter-spacing:-0.825px;">By Layer</div>
<div class="a" style="left:890px;top:145px;width:36px;height:837px;background:linear-gradient(90deg,#f6f4f1,#ece9e5);"></div>
<div class="a" style="left:888px;top:187px;width:2px;height:794px;background:#b5b0ab;"></div>
<div class="a" style="left:889px;top:145px;width:1px;height:42px;background:#b9b4af;"></div>
<div class="a" style="left:901px;top:150px;width:1px;height:1px;background:#b3aea8;"></div>
<div class="a" style="left:901px;top:153px;width:1px;height:1px;background:#b3aea8;"></div>
<div class="a" style="left:904px;top:150px;width:1px;height:1px;background:#b3aea8;"></div>
<div class="a" style="left:904px;top:153px;width:1px;height:1px;background:#b3aea8;"></div>
<div class="a" style="left:907px;top:150px;width:1px;height:1px;background:#b3aea8;"></div>
<div class="a" style="left:907px;top:153px;width:1px;height:1px;background:#b3aea8;"></div>
<div class="a" style="left:910px;top:150px;width:1px;height:1px;background:#b3aea8;"></div>
<div class="a" style="left:910px;top:153px;width:1px;height:1px;background:#b3aea8;"></div>
<div class="a" style="left:913px;top:150px;width:1px;height:1px;background:#b3aea8;"></div>
<div class="a" style="left:913px;top:153px;width:1px;height:1px;background:#b3aea8;"></div>
<div class="a" style="left:916px;top:150px;width:1px;height:1px;background:#b3aea8;"></div>
<div class="a" style="left:916px;top:153px;width:1px;height:1px;background:#b3aea8;"></div>
<div class="a" style="left:893px;top:158px;width:29px;height:29px;background:linear-gradient(#8a8a8a,#b4b4b4 30%,#e0e0e0);border:1px solid #7b7b7b;"></div>
<svg class="a" style="left:897px;top:162px;" width="21" height="21" viewBox="0 0 21 21"><rect x="0.500" y="0.500" width="20" height="20" rx="1.500" fill="#fcfcfc" stroke="#b9b9b9"/><rect x="1" y="1" width="19" height="3.200" fill="#000"/><rect x="1.800" y="1.600" width="2" height="2" fill="#fff"/><path d="M6.500 10l6-3v8.500l-6 3z" fill="#c8c8c8" stroke="#888" stroke-width="0.600"/><path d="M9 9l6-3v8.500l-6 3z" fill="#f0b0b0" stroke="#a66" stroke-width="0.600" opacity="0.900"/></svg>
<svg class="a" style="left:897px;top:191.5px;" width="21" height="21" viewBox="0 0 21 21"><rect x="0.500" y="0.500" width="20" height="20" rx="1.500" fill="#fcfcfc" stroke="#b9b9b9"/><rect x="1" y="1" width="19" height="3.200" fill="#000"/><rect x="1.800" y="1.600" width="2" height="2" fill="#fff"/><rect x="5.500" y="7.500" width="7" height="6" fill="#f3ecc0" stroke="#9a8a3a" stroke-width="0.800"/><circle cx="12.500" cy="13" r="3.200" fill="#f3ecc0" stroke="#9a8a3a" stroke-width="0.800"/></svg>
<div class="a" style="left:899px;top:221px;width:17px;height:1px;background:#cbc6c1;"></div>
<div class="a" style="left:893px;top:225px;width:29px;height:29px;background:linear-gradient(#8a8a8a,#b4b4b4 30%,#e0e0e0);border:1px solid #7b7b7b;"></div>
<svg class="a" style="left:897px;top:229px;" width="21" height="21" viewBox="0 0 21 21"><rect x="0.500" y="0.500" width="20" height="20" rx="1.500" fill="#fcfcfc" stroke="#b9b9b9"/><rect x="1" y="1" width="19" height="3.200" fill="#000"/><rect x="1.800" y="1.600" width="2" height="2" fill="#fff"/><rect x="2.600" y="6.4" width="3.400" height="2.600" fill="#000"/><rect x="8" y="6.2" width="10" height="3" fill="#dcdcdc" stroke="#aaa" stroke-width="0.500"/><rect x="2.600" y="10.8" width="3.400" height="2.600" fill="#000"/><rect x="8" y="10.600000000000001" width="10" height="3" fill="#dcdcdc" stroke="#aaa" stroke-width="0.500"/><rect x="2.600" y="15.200000000000001" width="3.400" height="2.600" fill="#000"/><rect x="8" y="15.0" width="10" height="3" fill="#dcdcdc" stroke="#aaa" stroke-width="0.500"/></svg>
<div class="a" style="left:899px;top:258px;width:17px;height:1px;background:#cbc6c1;"></div>
<div class="a" style="left:893px;top:262px;width:29px;height:29px;background:linear-gradient(#8a8a8a,#b4b4b4 30%,#e0e0e0);border:1px solid #7b7b7b;"></div>
<svg class="a" style="left:897px;top:266px;" width="21" height="21" viewBox="0 0 21 21"><rect x="0.500" y="0.500" width="20" height="20" rx="1.500" fill="#fcfcfc" stroke="#b9b9b9"/><rect x="1" y="1" width="19" height="3.200" fill="#000"/><rect x="1.800" y="1.600" width="2" height="2" fill="#fff"/><path d="M2.500 7h9M2.500 9.500h8M2.500 12h10M2.500 14.500h9" stroke="#bbb" stroke-width="0.800"/><rect x="1.500" y="16.800" width="18" height="2.600" fill="#e8e8e8" stroke="#999" stroke-width="0.500"/><path d="M3 18h3M8 18h10" stroke="#777" stroke-width="0.800"/></svg>
<!-- bottom -->
<div class="a" style="left:102px;top:902px;width:537px;height:54px;background:#fff;border:1px solid #b9b4af;border-top:none;border-right:none;"></div>
<div class="t" style="left:106.90px;top:903.02px;font-size:12.5px;line-height:12.5px;color:#1212d8;letter-spacing:-0.405px;font-style:italic;-webkit-text-stroke:0.2px #1212d8;">Command:</div>
<div class="t" style="left:168.70px;top:903.02px;font-size:12.5px;line-height:12.5px;color:#1212d8;letter-spacing:0.026px;-webkit-text-stroke:0.2px #1212d8;">polygonss</div>
<div class="t" style="left:106.90px;top:920.02px;font-size:12.5px;line-height:12.5px;color:#1212d8;letter-spacing:-0.405px;font-style:italic;-webkit-text-stroke:0.2px #1212d8;">Command:</div>
<div class="t" style="left:168.70px;top:920.02px;font-size:12.5px;line-height:12.5px;color:#1212d8;letter-spacing:0.253px;-webkit-text-stroke:0.2px #1212d8;">linemenu</div>
<div class="t" style="left:106.90px;top:937.02px;font-size:12.5px;line-height:12.5px;color:#1212d8;letter-spacing:-0.405px;font-style:italic;-webkit-text-stroke:0.2px #1212d8;">Command:</div>
<div class="t" style="left:168.70px;top:937.02px;font-size:12.5px;line-height:12.5px;color:#1212d8;letter-spacing:0.180px;-webkit-text-stroke:0.2px #1212d8;">line</div>
<div class="a" style="left:624px;top:902px;width:14px;height:54px;background:#f6f4f2;border-left:1px solid #b6b2ad;"></div>
<svg class="a" style="left:625px;top:902px;" width="13" height="13" viewBox="0 0 13 13"><path d="M2.400 8.900h8.200l-4.100-4.400z" fill="#555"/></svg>
<svg class="a" style="left:625px;top:942px;" width="13" height="13" viewBox="0 0 13 13"><path d="M2.400 4.400h8.200l-4.100 4.400z" fill="#555"/></svg>
<div class="a" style="left:625px;top:915px;width:13px;height:1px;background:#cfcbc6;"></div>
<div class="a" style="left:625px;top:941px;width:13px;height:1px;background:#cfcbc6;"></div>
<div class="a" style="left:102px;top:956px;width:537px;height:1px;background:#aaa5a0;"></div>
<div class="a" style="left:102px;top:957px;width:537px;height:24px;background:#efebe7;border-left:1px solid #b9b4af;"></div>
<div class="t" style="left:103.20px;top:961.87px;font-size:13.5px;line-height:13.5px;color:#1a1a1a;letter-spacing:-0.320px;">First point:</div>
<div class="a" style="left:167px;top:960px;width:445px;height:19px;background:#fff;"></div>
<div class="a" style="left:613px;top:958px;width:24px;height:22px;background:linear-gradient(#fbfaf9,#edebe8);border:1px solid #b4afa9;border-radius:3px;"></div>
<svg class="a" style="left:618px;top:963px;" width="14" height="12" viewBox="0 0 14 12"><rect x="0.700" y="0.700" width="12.600" height="10.600" fill="#fff" stroke="#222" stroke-width="1.200"/><rect x="0.700" y="0.700" width="12.600" height="3.200" fill="#111"/></svg>
<div class="a" style="left:102px;top:981px;width:537px;height:1px;background:#b9b4af;"></div>
<div class="a" style="left:638px;top:957px;width:1px;height:24px;background:#d6d2cd;"></div>
<div class="a" style="left:14px;top:982px;width:912px;height:45px;background:#efebe7;"></div>
<div class="t" style="left:16.30px;top:988.57px;font-size:13.5px;line-height:13.5px;color:#1a1a1a;letter-spacing:-0.800px;">220,170</div>
<div class="t" style="left:16.30px;top:1008.57px;font-size:13.5px;line-height:13.5px;color:#1a1a1a;letter-spacing:-0.847px;">@50.9567,141.1286</div>
<div class="a" style="left:165px;top:985px;width:1px;height:39px;background:#aaa5a0;"></div>
<div class="t" style="left:169.70px;top:988.57px;font-size:13.5px;line-height:13.5px;color:#1a1a1a;letter-spacing:-0.737px;">278.0288&lt;38°</div>
<div class="t" style="left:169.70px;top:1008.57px;font-size:13.5px;line-height:13.5px;color:#1a1a1a;letter-spacing:-0.942px;">@150.0462&lt;70°</div>
<div class="a" style="left:317px;top:998px;width:1px;height:1px;background:#b3aea8;"></div>
<div class="a" style="left:317px;top:1001px;width:1px;height:1px;background:#b3aea8;"></div>
<div class="a" style="left:317px;top:1004px;width:1px;height:1px;background:#b3aea8;"></div>
<div class="a" style="left:317px;top:1007px;width:1px;height:1px;background:#b3aea8;"></div>
<div class="a" style="left:317px;top:1010px;width:1px;height:1px;background:#b3aea8;"></div>
<div class="a" style="left:317px;top:1013px;width:1px;height:1px;background:#b3aea8;"></div>
<div class="a" style="left:577px;top:998px;width:1px;height:1px;background:#b3aea8;"></div>
<div class="a" style="left:577px;top:1001px;width:1px;height:1px;background:#b3aea8;"></div>
<div class="a" style="left:577px;top:1004px;width:1px;height:1px;background:#b3aea8;"></div>
<div class="a" style="left:577px;top:1007px;width:1px;height:1px;background:#b3aea8;"></div>
<div class="a" style="left:577px;top:1010px;width:1px;height:1px;background:#b3aea8;"></div>
<div class="a" style="left:577px;top:1013px;width:1px;height:1px;background:#b3aea8;"></div>
<div class="t" style="left:367.00px;top:998.87px;font-size:13.5px;line-height:13.5px;color:#1a1a1a;letter-spacing:-0.227px;">First point</div>
<svg class="a" style="left:436px;top:988px;" width="22" height="33" viewBox="0 0 22 33"><rect x="2.300" y="1.800" width="17.400" height="29.400" rx="8.400" fill="#fbfbfb" stroke="#444" stroke-width="1"/><path d="M2.300 14.200h17.400M11 1.800v12.400" stroke="#444" stroke-width="0.900"/><rect x="9.400" y="4.200" width="3.200" height="7" rx="1.600" fill="#fff" stroke="#444" stroke-width="0.900"/></svg>
<div class="t" style="left:471.20px;top:998.87px;font-size:13.5px;line-height:13.5px;color:#1a1a1a;letter-spacing:-1.004px;">Cancel</div>
<div class="t" style="left:581.50px;top:998.87px;font-size:13.5px;line-height:13.5px;color:#1a1a1a;letter-spacing:-0.428px;">No entities selected.</div>
<svg class="a" style="left:913px;top:1014px;" width="13" height="13" viewBox="0 0 13 13"><rect x="1" y="10" width="1" height="1" fill="#9a958f"/><rect x="4" y="7" width="1" height="1" fill="#9a958f"/><rect x="4" y="10" width="1" height="1" fill="#9a958f"/><rect x="7" y="4" width="1" height="1" fill="#9a958f"/><rect x="7" y="7" width="1" height="1" fill="#9a958f"/><rect x="7" y="10" width="1" height="1" fill="#9a958f"/><rect x="10" y="1" width="1" height="1" fill="#9a958f"/><rect x="10" y="4" width="1" height="1" fill="#9a958f"/><rect x="10" y="7" width="1" height="1" fill="#9a958f"/><rect x="10" y="10" width="1" height="1" fill="#9a958f"/></svg>
</body></html>
